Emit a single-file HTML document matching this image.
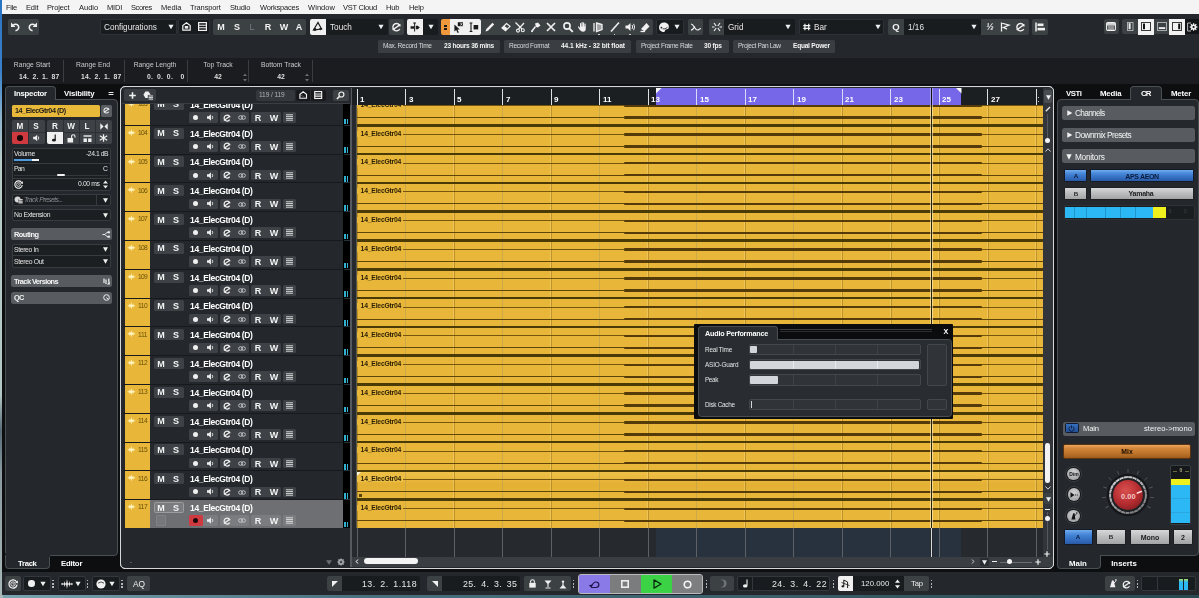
<!DOCTYPE html><html><head><meta charset="utf-8"><title>Cubase Project</title><style>
html,body{margin:0;padding:0}
body{width:1199px;height:598px;overflow:hidden;position:relative;background:#0d0e10;font-family:"Liberation Sans",sans-serif;}
div{position:absolute;box-sizing:border-box}
svg{position:absolute;overflow:visible}
.t{white-space:nowrap;will-change:transform}
</style></head><body>
<div style="left:0px;top:0px;width:1199px;height:598px;background:linear-gradient(90deg,#7aa4b0 0%,#4a7080 30%,#2a4a52 100%);"></div>
<div style="left:0px;top:0px;width:3px;height:598px;background:linear-gradient(180deg,#2a74c4 0%,#3a80c8 12%,#8fb4cc 20%,#b8ccc8 27%,#b4c6c4 66%,#5a6a78 72%,#8a9aa0 79%,#a8b8b8 100%);"></div>
<div style="left:2px;top:0px;width:1197px;height:595.2px;background:#0d0e10;"></div>
<div style="left:2px;top:0px;width:1197px;height:14.2px;background:#f4f4f4;"></div>
<div class="t" style="top:2.05px;line-height:11.5px;font-size:7.5px;color:#1a1a1a;letter-spacing:-0.273px;left:6.3px;">File</div>
<div class="t" style="top:2.05px;line-height:11.5px;font-size:7.5px;color:#1a1a1a;letter-spacing:-0.134px;left:25.9px;">Edit</div>
<div class="t" style="top:2.05px;line-height:11.5px;font-size:7.5px;color:#1a1a1a;letter-spacing:-0.135px;left:47.3px;">Project</div>
<div class="t" style="top:2.05px;line-height:11.5px;font-size:7.5px;color:#1a1a1a;letter-spacing:0.002px;left:78.6px;">Audio</div>
<div class="t" style="top:2.05px;line-height:11.5px;font-size:7.5px;color:#1a1a1a;letter-spacing:-0.186px;left:107px;">MIDI</div>
<div class="t" style="top:2.05px;line-height:11.5px;font-size:7.5px;color:#1a1a1a;letter-spacing:-0.407px;left:130.9px;">Scores</div>
<div class="t" style="top:2.05px;line-height:11.5px;font-size:7.5px;color:#1a1a1a;letter-spacing:-0.008px;left:161.4px;">Media</div>
<div class="t" style="top:2.05px;line-height:11.5px;font-size:7.5px;color:#1a1a1a;letter-spacing:-0.125px;left:190.4px;">Transport</div>
<div class="t" style="top:2.05px;line-height:11.5px;font-size:7.5px;color:#1a1a1a;letter-spacing:-0.147px;left:230px;">Studio</div>
<div class="t" style="top:2.05px;line-height:11.5px;font-size:7.5px;color:#1a1a1a;letter-spacing:-0.214px;left:259.9px;">Workspaces</div>
<div class="t" style="top:2.05px;line-height:11.5px;font-size:7.5px;color:#1a1a1a;letter-spacing:0.069px;left:307.6px;">Window</div>
<div class="t" style="top:2.05px;line-height:11.5px;font-size:7.5px;color:#1a1a1a;letter-spacing:-0.260px;left:343.3px;">VST Cloud</div>
<div class="t" style="top:2.05px;line-height:11.5px;font-size:7.5px;color:#1a1a1a;letter-spacing:-0.155px;left:386px;">Hub</div>
<div class="t" style="top:2.05px;line-height:11.5px;font-size:7.5px;color:#1a1a1a;letter-spacing:-0.209px;left:408.7px;">Help</div>
<div style="left:2px;top:14.2px;width:1197px;height:43.8px;background:#24282c;"></div>
<div style="left:8px;top:19px;width:31px;height:15.5px;background:#3c4144;border-radius:2px"></div>
<svg style="left:10px;top:21px" width="28" height="12" viewBox="0 0 28 12"><g fill="none" stroke="#f0f0f0" stroke-width="1.6"><path d="M3.2 4.2 A3.2 3.2 0 1 1 5.5 9.6"/><path d="M24.8 4.2 A3.2 3.2 0 1 0 22.5 9.6"/></g><path d="M1 1.5 L1 6 L5.5 6 Z" fill="#f0f0f0"/><path d="M27 1.5 L27 6 L22.5 6 Z" fill="#f0f0f0"/></svg>
<div style="left:100px;top:19px;width:77px;height:15.5px;background:#191c1f;border-radius:2px;border:1px solid #2e3236"></div>
<div class="t" style="top:21.50px;line-height:12.2px;font-size:8.2px;color:#e6e6e6;left:104px;">Configurations</div>
<svg style="left:168px;top:24px" width="6" height="6"><path d="M0.4 0.7 L5.6 0.7 L3 5.2 Z" fill="#f0f0f0"/></svg>
<div style="left:178px;top:19px;width:32px;height:15.5px;background:#191c1f;border-radius:2px;border:1px solid #2e3236"></div>
<svg style="left:182px;top:22px" width="9" height="9" viewBox="0 0 9 9"><path d="M0.8 8.2 L0.8 3.5 L4.5 0.8 L8.2 3.5 L8.2 8.2 Z" fill="none" stroke="#f0f0f0" stroke-width="1.2"/><rect x="2.8" y="4" width="3.4" height="2.6" fill="#f0f0f0"/></svg>
<svg style="left:198px;top:22px" width="9" height="9" viewBox="0 0 9 9"><rect x="0.6" y="0.6" width="7.8" height="7.8" fill="none" stroke="#f0f0f0" stroke-width="1.2"/><path d="M0.6 3.3 H8.4 M0.6 5.8 H8.4" stroke="#f0f0f0" stroke-width="1.1"/></svg>
<div style="left:213px;top:19px;width:93px;height:15.5px;background:#3c4144;border-radius:2px"></div>
<div class="t" style="top:20.50px;line-height:13px;font-size:9px;color:#f2f2f2;font-weight:bold;left:214.00px;width:14px;text-align:center;">M</div>
<div class="t" style="top:20.50px;line-height:13px;font-size:9px;color:#f2f2f2;font-weight:bold;left:230.00px;width:14px;text-align:center;">S</div>
<div class="t" style="top:20.50px;line-height:13px;font-size:9px;color:#777c80;left:245.00px;width:14px;text-align:center;">L</div>
<div class="t" style="top:20.50px;line-height:13px;font-size:9px;color:#f2f2f2;font-weight:bold;left:261.00px;width:14px;text-align:center;">R</div>
<div class="t" style="top:20.50px;line-height:13px;font-size:9px;color:#f2f2f2;font-weight:bold;left:277.00px;width:14px;text-align:center;">W</div>
<div class="t" style="top:20.50px;line-height:13px;font-size:9px;color:#f2f2f2;font-weight:bold;left:292.00px;width:14px;text-align:center;">A</div>
<div style="left:310px;top:19px;width:16px;height:15.5px;background:#f0f0f0;border-radius:2px 0 0 2px"></div>
<svg style="left:312px;top:21px" width="12" height="12" viewBox="0 0 12 12"><path d="M1.5 9 L6 1.5 L9.5 8 Z" fill="none" stroke="#1a1a1a" stroke-width="1.2"/><circle cx="3" cy="8.5" r="1.4" fill="#1a1a1a"/><path d="M7 7 h3.5 l-1.8 2.5z" fill="#1a1a1a"/></svg>
<div style="left:326px;top:19px;width:62px;height:15.5px;background:#191c1f;border-radius:0 2px 2px 0"></div>
<div class="t" style="top:21.50px;line-height:12.2px;font-size:8.2px;color:#e6e6e6;left:330px;">Touch</div>
<svg style="left:378px;top:24px" width="6" height="6"><path d="M0.4 0.7 L5.6 0.7 L3 5.2 Z" fill="#f0f0f0"/></svg>
<div style="left:389px;top:19px;width:15px;height:15.5px;background:#3c4144;border-radius:2px"></div>
<svg style="left:392px;top:22px" width="9" height="10" viewBox="0 0 9 10"><path d="M0.6 8 L8.4 2.4 M7.8 7 A3.7 3.7 0 1 1 8.2 4.3" fill="none" stroke="#f0f0f0" stroke-width="1.4"/></svg>
<div style="left:407px;top:19px;width:16px;height:15.5px;background:#f0f0f0;border-radius:2px 0 0 2px"></div>
<svg style="left:409px;top:21px" width="12" height="12" viewBox="0 0 12 12"><path d="M5.6 2 V10.5 M4.2 2 H7" stroke="#1a1a1a" stroke-width="1"/><path d="M1.6 5.2 H5 V7.8 H1.6Z M6.8 4.8 H8.8 L10.8 6.5 L8.8 8.2 H6.8Z" fill="#1a1a1a"/></svg>
<div style="left:423px;top:19px;width:15px;height:15.5px;background:#191c1f;border-radius:0 2px 2px 0"></div>
<svg style="left:427.5px;top:24px" width="6" height="6"><path d="M0.4 0.7 L5.6 0.7 L3 5.2 Z" fill="#f0f0f0"/></svg>
<div style="left:441px;top:19px;width:9px;height:15.5px;background:#f0983c;border-radius:2px 0 0 2px"></div>
<div style="left:444px;top:24.5px;width:2.6px;height:2px;background:#1a1a1a;"></div>
<div style="left:444px;top:28px;width:2.6px;height:2px;background:#1a1a1a;"></div>
<div style="left:449.5px;top:19px;width:31.2px;height:15.5px;background:#f0f0f0;border-radius:0 2px 2px 0"></div>
<svg style="left:452px;top:21px" width="12" height="13" viewBox="0 0 12 13"><path d="M2.4 3.6 L2.4 10.6 L4.2 9 L5.6 12 L6.8 11.4 L5.5 8.5 L7.8 8.4 Z" fill="#1a1a1a"/><path d="M5.8 1.2 h5.2 v4 h-5.2z" fill="#1a1a1a"/><path d="M8.4 1.8 L10.4 4.6 M10.4 1.8 L8.4 4.6" stroke="#f0f0f0" stroke-width="0.7"/></svg>
<svg style="left:468px;top:21px" width="12" height="12" viewBox="0 0 12 12"><path d="M1.6 2 H4.4 M1.6 10.5 H4.4 M3 2 V10.5" stroke="#1a1a1a" stroke-width="1.1" fill="none"/><rect x="5.6" y="4" width="4.6" height="4.4" fill="#1a1a1a"/></svg>
<div style="left:480.7px;top:19px;width:172.5px;height:15.5px;background:#3c4144;border-radius:0 2px 2px 0"></div>
<svg style="left:484px;top:21px" width="12" height="12" viewBox="0 0 12 12"><path d="M1.5 10.5 L2.3 8 L8.5 1.8 L10.2 3.5 L4 9.7 Z" fill="#f0f0f0"/></svg>
<svg style="left:499.5px;top:21px" width="12" height="12" viewBox="0 0 12 12"><path d="M2 7 L6.5 2.5 L10 5.3 L5.5 9.8 Z" fill="none" stroke="#f0f0f0" stroke-width="1.2"/><path d="M2 7 L4.2 4.8 L7.7 7.6 L5.5 9.8Z" fill="#f0f0f0"/></svg>
<svg style="left:514px;top:21px" width="12" height="12" viewBox="0 0 12 12"><path d="M1.5 1.5 L8 8 M10 2 L4.5 8" stroke="#f0f0f0" stroke-width="1.3"/><circle cx="8.8" cy="9.3" r="1.5" fill="none" stroke="#f0f0f0" stroke-width="1.1"/><circle cx="4" cy="9.6" r="1.5" fill="none" stroke="#f0f0f0" stroke-width="1.1"/></svg>
<svg style="left:530px;top:21px" width="12" height="12" viewBox="0 0 12 12"><path d="M5 2.5 L8 1.5 L10.5 4.5 L8 6.5 L6 6 Z" fill="#f0f0f0"/><path d="M5.5 5.5 L2 10" stroke="#f0f0f0" stroke-width="1.5"/><circle cx="2" cy="10.3" r="1" fill="#f0f0f0"/></svg>
<svg style="left:545px;top:21px" width="12" height="12" viewBox="0 0 12 12"><path d="M2 2 L10 10 M10 2 L2 10" stroke="#f0f0f0" stroke-width="1.7"/></svg>
<svg style="left:561.5px;top:21px" width="12" height="12" viewBox="0 0 12 12"><circle cx="5" cy="5" r="3.1" fill="none" stroke="#f0f0f0" stroke-width="1.6"/><path d="M7.3 7.3 L10.8 10.8" stroke="#f0f0f0" stroke-width="1.9"/></svg>
<svg style="left:577.3px;top:21px" width="12" height="12" viewBox="0 0 12 12"><path d="M3.6 6 V2.6 M5.1 6 V1.6 M6.6 6 V1.9 M8.1 6 V3" stroke="#f0f0f0" stroke-width="1.15" stroke-linecap="round"/><path d="M3 5.6 H8.7 V8 Q8.7 10.8 6 10.8 Q3.9 10.8 3 8.8Z" fill="#f0f0f0"/><path d="M3.3 8.6 L1.6 6" stroke="#f0f0f0" stroke-width="1.3" stroke-linecap="round"/></svg>
<svg style="left:592px;top:21px" width="12" height="12" viewBox="0 0 12 12"><path d="M2 2 V10.5 M4.5 2 L10 3.5 L10 8.5 L4.5 10.5 Z" stroke="#f0f0f0" stroke-width="1.3" fill="#f0f0f0" fill-opacity="0.55"/></svg>
<svg style="left:608.7px;top:21px" width="12" height="12" viewBox="0 0 12 12"><path d="M2 10.5 L10 1.5" stroke="#f0f0f0" stroke-width="1.6"/></svg>
<svg style="left:623.5px;top:21px" width="12" height="12" viewBox="0 0 12 12"><path d="M1.5 4.5 H3.8 L6.5 2 V10 L3.8 7.5 H1.5Z" fill="#f0f0f0"/><path d="M8 4 Q9.3 6 8 8 M9.6 2.8 Q11.6 6 9.6 9.2" stroke="#f0f0f0" stroke-width="1" fill="none"/></svg>
<svg style="left:639.3px;top:21px" width="12" height="12" viewBox="0 0 12 12"><path d="M2 8 L7.5 2 L10.5 5.5 L5.5 10.5 Z" fill="#f0f0f0"/><path d="M1.5 10.5 H6" stroke="#f0f0f0" stroke-width="1.3"/></svg>
<div style="left:598px;top:33.6px;width:1.6px;height:1.2px;background:#c8c8c8;"></div>
<div style="left:613.5px;top:33.6px;width:1.6px;height:1.2px;background:#c8c8c8;"></div>
<div style="left:629px;top:33.6px;width:1.6px;height:1.2px;background:#c8c8c8;"></div>
<div style="left:656px;top:19px;width:28px;height:15.5px;background:#191c1f;border-radius:2px;border:1px solid #2e3236"></div>
<svg style="left:658px;top:21px" width="12" height="12" viewBox="0 0 12 12"><path d="M6 1.5 C9.5 1.5 11.3 4 10.8 6.5 C10.3 8.6 8 8 7.2 9 C6.6 9.8 7.4 11 5.8 11 C2.6 11 0.8 8.4 1 6 C1.2 3.4 3.2 1.5 6 1.5Z" fill="#f0f0f0"/><circle cx="3.4" cy="6.6" r="0.9" fill="#191c1f"/><path d="M4.6 7.8 Q7 8.6 9.4 6.4" stroke="#191c1f" stroke-width="0.8" fill="none"/></svg>
<svg style="left:674px;top:24px" width="6" height="6"><path d="M0.4 0.7 L5.6 0.7 L3 5.2 Z" fill="#f0f0f0"/></svg>
<div style="left:688px;top:19px;width:15px;height:15.5px;background:#3c4144;border-radius:2px"></div>
<svg style="left:689.5px;top:21px" width="12" height="12" viewBox="0 0 12 12"><path d="M1 3 C4 3 4.5 9 7.5 9 C9 9 9.5 7.5 11 7.5 M1 9.2 C3 9.2 3.5 7 5 5.5" stroke="#f0f0f0" stroke-width="1.2" fill="none"/></svg>
<div style="left:709px;top:19px;width:15px;height:15.5px;background:#3c4144;border-radius:2px 0 0 2px"></div>
<svg style="left:710.5px;top:21px" width="12" height="12" viewBox="0 0 12 12"><path d="M3 2 L5.2 5 M9 2 L6.8 5 M3 10 L5.2 7 M9 10 L6.8 7 M1 6 H3.5 M8.5 6 H11" stroke="#f0f0f0" stroke-width="1.2"/></svg>
<div style="left:724px;top:19px;width:71px;height:15.5px;background:#191c1f;border-radius:0 2px 2px 0"></div>
<div class="t" style="top:21.50px;line-height:12.2px;font-size:8.2px;color:#e6e6e6;left:728px;">Grid</div>
<svg style="left:785px;top:24px" width="6" height="6"><path d="M0.4 0.7 L5.6 0.7 L3 5.2 Z" fill="#f0f0f0"/></svg>
<div style="left:799px;top:19px;width:85px;height:15.5px;background:#191c1f;border-radius:2px;border:1px solid #2e3236"></div>
<svg style="left:802px;top:21px" width="10" height="12" viewBox="0 0 12 12"><path d="M3.5 2 V10 M8 2 V10 M1.5 4.3 H10 M1.5 7.7 H10" stroke="#f0f0f0" stroke-width="1.5"/></svg>
<div class="t" style="top:21.50px;line-height:12.2px;font-size:8.2px;color:#e6e6e6;left:814px;">Bar</div>
<svg style="left:875px;top:24px" width="6" height="6"><path d="M0.4 0.7 L5.6 0.7 L3 5.2 Z" fill="#f0f0f0"/></svg>
<div style="left:888px;top:19px;width:16px;height:15.5px;background:#3c4144;border-radius:2px 0 0 2px"></div>
<div class="t" style="top:20.25px;line-height:13.5px;font-size:9.5px;color:#f0f0f0;font-weight:bold;left:889.00px;width:14px;text-align:center;">Q</div>
<div style="left:904px;top:19px;width:77px;height:15.5px;background:#191c1f;border-radius:0 2px 2px 0"></div>
<div class="t" style="top:21.50px;line-height:12.2px;font-size:8.2px;color:#e6e6e6;left:908px;">1/16</div>
<svg style="left:971px;top:24px" width="6" height="6"><path d="M0.4 0.7 L5.6 0.7 L3 5.2 Z" fill="#f0f0f0"/></svg>
<div style="left:981px;top:19px;width:48px;height:15.5px;background:#3c4144;border-radius:0 2px 2px 0"></div>
<div class="t" style="top:20.50px;line-height:13px;font-size:9px;color:#f0f0f0;font-weight:bold;left:983.00px;width:14px;text-align:center;font-style:italic;">&#189;</div>
<svg style="left:999px;top:21px" width="12" height="12" viewBox="0 0 12 12"><path d="M2.5 1.5 V10.5 M2.5 2 L10 4.2 L4.5 6.5 L8 8.2" stroke="#f0f0f0" stroke-width="1.3" fill="none"/></svg>
<svg style="left:1016px;top:22px" width="9" height="10" viewBox="0 0 9 10"><path d="M0.6 8 L8.4 2.4 M7.8 7 A3.7 3.7 0 1 1 8.2 4.3" fill="none" stroke="#f0f0f0" stroke-width="1.4"/></svg>
<div style="left:1032px;top:19px;width:16px;height:15.5px;background:#3c4144;border-radius:2px"></div>
<svg style="left:1034px;top:21px" width="12" height="12" viewBox="0 0 12 12"><path d="M2 1.5 V10.5" stroke="#f0f0f0" stroke-width="1.5"/><rect x="3.5" y="2.5" width="6" height="2.6" fill="#f0f0f0"/><rect x="3.5" y="6.8" width="7.5" height="2.6" fill="#f0f0f0"/></svg>
<div style="left:1103.5px;top:19px;width:15.5px;height:15px;background:#3c4144;border-radius:2px"></div>
<svg style="left:1106.3px;top:22px" width="10" height="9" viewBox="0 0 10 9"><rect x="0.6" y="0.6" width="8.8" height="7.8" rx="1.2" fill="none" stroke="#f0f0f0" stroke-width="1.1"/><rect x="1" y="1" width="8" height="2.6" fill="#f0f0f0" opacity="0.8"/><path d="M3 3.8 V8 M5 3.8 V8 M7 3.8 V8" stroke="#f0f0f0" stroke-width="0.9"/></svg>
<div style="left:1122.3px;top:19px;width:16px;height:15px;background:#3c4144;border-radius:2px 0 0 2px"></div>
<svg style="left:1127px;top:22px" width="7" height="9" viewBox="0 0 7 9"><rect x="0.5" y="0.5" width="5.5" height="8" fill="none" stroke="#b8babc" stroke-width="0.9"/><rect x="1.6" y="1.2" width="2" height="6" fill="#f0f0f0"/></svg>
<div style="left:1138px;top:18.5px;width:15.5px;height:16px;background:#f2f2f2;"></div>
<svg style="left:1141px;top:22px" width="10" height="9" viewBox="0 0 10 9"><rect x="0.5" y="0.5" width="9" height="8" fill="none" stroke="#3a3a3a" stroke-width="1"/><rect x="2" y="1.6" width="2" height="5.6" fill="#101010"/></svg>
<div style="left:1153.5px;top:19px;width:15.5px;height:15px;background:#3c4144;"></div>
<svg style="left:1156.5px;top:22px" width="10" height="9" viewBox="0 0 10 9"><rect x="0.5" y="0.5" width="9" height="8" fill="none" stroke="#b8babc" stroke-width="0.9"/><rect x="1.8" y="5.2" width="6.4" height="1.8" fill="#f0f0f0"/></svg>
<div style="left:1169px;top:18.5px;width:16px;height:16px;background:#f2f2f2;"></div>
<svg style="left:1172px;top:22px" width="10" height="9" viewBox="0 0 10 9"><rect x="0.5" y="0.5" width="9" height="8" fill="none" stroke="#3a3a3a" stroke-width="1"/><rect x="6.2" y="1.6" width="2" height="5.6" fill="#101010"/></svg>
<div style="left:1185px;top:19px;width:14px;height:15px;background:#121417;"></div>
<svg style="left:1187px;top:21.5px" width="11" height="10" viewBox="0 0 11 10"><path d="M4 1 H0.6 V9 H4" fill="none" stroke="#b8babc" stroke-width="1"/><g transform="translate(6.6,5)"><circle r="2.6" fill="#f0f0f0"/><path d="M0 -3.8 V3.8 M-3.8 0 H3.8 M-2.7 -2.7 L2.7 2.7 M2.7 -2.7 L-2.7 2.7" stroke="#f0f0f0" stroke-width="1.3"/><circle r="1.1" fill="#121417"/></g></svg>
<div style="left:378px;top:39.5px;width:121.5px;height:13px;background:#3a3e42;border-radius:1.5px"></div>
<div class="t" style="top:41.20px;line-height:10.6px;font-size:6.6px;color:#d6d8da;letter-spacing:-0.300px;left:383px;">Max. Record Time</div>
<div class="t" style="top:41.20px;line-height:10.6px;font-size:6.6px;color:#f2f2f2;font-weight:bold;letter-spacing:-0.242px;left:443.7px;">23 hours 36 mins</div>
<div style="left:504px;top:39.5px;width:127px;height:13px;background:#3a3e42;border-radius:1.5px"></div>
<div class="t" style="top:41.20px;line-height:10.6px;font-size:6.6px;color:#d6d8da;letter-spacing:-0.291px;left:509px;">Record Format</div>
<div class="t" style="top:41.20px;line-height:10.6px;font-size:6.6px;color:#f2f2f2;font-weight:bold;letter-spacing:-0.054px;left:561px;">44.1 kHz - 32 bit float</div>
<div style="left:635.5px;top:39.5px;width:93px;height:13px;background:#3a3e42;border-radius:1.5px"></div>
<div class="t" style="top:41.20px;line-height:10.6px;font-size:6.6px;color:#d6d8da;letter-spacing:-0.304px;left:640.5px;">Project Frame Rate</div>
<div class="t" style="top:41.20px;line-height:10.6px;font-size:6.6px;color:#f2f2f2;font-weight:bold;letter-spacing:-0.227px;left:704.3px;">30 fps</div>
<div style="left:732.5px;top:39.5px;width:102px;height:13px;background:#3a3e42;border-radius:1.5px"></div>
<div class="t" style="top:41.20px;line-height:10.6px;font-size:6.6px;color:#d6d8da;letter-spacing:-0.354px;left:737.5px;">Project Pan Law</div>
<div class="t" style="top:41.20px;line-height:10.6px;font-size:6.6px;color:#f2f2f2;font-weight:bold;letter-spacing:-0.253px;left:792.5px;">Equal Power</div>
<div style="left:2px;top:58px;width:1197px;height:25.5px;background:#1a1c1f;"></div>
<div style="left:62.5px;top:60px;width:1px;height:22px;background:#3a3e42;"></div>
<div style="left:124px;top:60px;width:1px;height:22px;background:#3a3e42;"></div>
<div style="left:186.5px;top:60px;width:1px;height:22px;background:#3a3e42;"></div>
<div style="left:247.5px;top:60px;width:1px;height:22px;background:#3a3e42;"></div>
<div style="left:312px;top:60px;width:1px;height:22px;background:#3a3e42;"></div>
<div class="t" style="top:60.10px;line-height:10.8px;font-size:6.8px;color:#c9cbcd;left:-3.00px;width:70px;text-align:center;">Range Start</div>
<div class="t" style="top:72.00px;line-height:10.8px;font-size:6.8px;color:#dedede;font-weight:bold;letter-spacing:0.165px;right:1139.33px;text-align:right;word-spacing:1.5px;">14. 2. 1. 87</div>
<div class="t" style="top:60.10px;line-height:10.8px;font-size:6.8px;color:#c9cbcd;left:58.00px;width:70px;text-align:center;">Range End</div>
<div class="t" style="top:72.00px;line-height:10.8px;font-size:6.8px;color:#dedede;font-weight:bold;letter-spacing:0.165px;right:1077.83px;text-align:right;word-spacing:1.5px;">14. 2. 1. 87</div>
<div class="t" style="top:60.10px;line-height:10.8px;font-size:6.8px;color:#c9cbcd;left:120.00px;width:70px;text-align:center;">Range Length</div>
<div class="t" style="top:72.00px;line-height:10.8px;font-size:6.8px;color:#dedede;font-weight:bold;letter-spacing:0.287px;right:1014.71px;text-align:right;word-spacing:1.5px;">0. 0. 0.&nbsp; 0</div>
<div class="t" style="top:60.10px;line-height:10.8px;font-size:6.8px;color:#c9cbcd;left:182.50px;width:70px;text-align:center;">Top Track</div>
<div class="t" style="top:72.00px;line-height:10.8px;font-size:6.8px;color:#dedede;font-weight:bold;left:197.50px;width:40px;text-align:center;">42</div>
<div class="t" style="top:60.10px;line-height:10.8px;font-size:6.8px;color:#c9cbcd;left:245.50px;width:70px;text-align:center;">Bottom Track</div>
<div class="t" style="top:72.00px;line-height:10.8px;font-size:6.8px;color:#dedede;font-weight:bold;left:260.50px;width:40px;text-align:center;">42</div>
<svg style="left:242.5px;top:72.5px" width="4" height="9"><path d="M0 3 L2 0.5 L4 3Z M0 6 L2 8.5 L4 6Z" fill="#6a6e72"/></svg>
<svg style="left:304.5px;top:72.5px" width="4" height="9"><path d="M0 3 L2 0.5 L4 3Z M0 6 L2 8.5 L4 6Z" fill="#6a6e72"/></svg>
<div style="left:4.5px;top:99px;width:113.5px;height:457px;background:#24282c;border:1px solid #4a4f54;border-radius:0 4px 4px 4px"></div>
<div style="left:4.5px;top:86px;width:51px;height:14px;background:#24282c;border:1px solid #4a4f54;border-bottom:none;border-radius:4px 4px 0 0"></div>
<div class="t" style="top:88.10px;line-height:11.8px;font-size:7.8px;color:#ffffff;font-weight:bold;letter-spacing:-0.244px;left:13.7px;">Inspector</div>
<div class="t" style="top:88.10px;line-height:11.8px;font-size:7.8px;color:#ffffff;font-weight:bold;letter-spacing:-0.144px;left:64.3px;">Visibility</div>
<div class="t" style="top:86.55px;line-height:13.5px;font-size:9.5px;color:#e8e8e8;font-weight:bold;left:106.00px;width:10px;text-align:center;">=</div>
<div style="left:4.5px;top:555px;width:45.5px;height:14px;background:#24282c;border:1px solid #4a4f54;border-top:none;border-radius:0 0 4px 4px"></div>
<div style="left:5.5px;top:553px;width:44px;height:4px;background:#24282c;"></div>
<div class="t" style="top:557.90px;line-height:11.8px;font-size:7.8px;color:#ffffff;font-weight:bold;letter-spacing:-0.358px;left:17.6px;">Track</div>
<div class="t" style="top:557.90px;line-height:11.8px;font-size:7.8px;color:#ffffff;font-weight:bold;letter-spacing:-0.222px;left:61px;">Editor</div>
<div style="left:11.5px;top:105px;width:88.5px;height:11.5px;background:#e9b93a;border-radius:1.5px"></div>
<div class="t" style="top:105.40px;line-height:11.2px;font-size:7.2px;color:#1a1a1a;font-weight:bold;letter-spacing:-0.421px;left:14.5px;">14_ElecGtr04 (D)</div>
<div style="left:101px;top:105px;width:10.5px;height:11.5px;background:#5a5e62;border-radius:1.5px"></div>
<svg style="left:102.8px;top:107.3px" width="7" height="7" viewBox="0 0 9 10"><path d="M0.8 7.8 L8.2 2.4 M7.6 6.8 A3.6 3.6 0 1 1 8 4.2" fill="none" stroke="#f0f0f0" stroke-width="1.5"/></svg>
<div style="left:11.5px;top:120px;width:33px;height:24px;background:#3e4246;border-radius:2px"></div>
<div style="left:46.5px;top:120px;width:65px;height:24px;background:#3e4246;border-radius:2px"></div>
<div style="left:28px;top:120px;width:0.8px;height:24px;background:#2c3034;"></div>
<div style="left:63px;top:120px;width:0.8px;height:24px;background:#2c3034;"></div>
<div style="left:79px;top:120px;width:0.8px;height:24px;background:#2c3034;"></div>
<div style="left:95px;top:120px;width:0.8px;height:24px;background:#2c3034;"></div>
<div style="left:11.5px;top:131.6px;width:100px;height:0.8px;background:#2c3034;"></div>
<div style="left:44.5px;top:120px;width:2px;height:24px;background:#24282c;"></div>
<div class="t" style="top:120.50px;line-height:12.2px;font-size:8.2px;color:#f2f2f2;font-weight:bold;left:13.00px;width:14px;text-align:center;">M</div>
<div class="t" style="top:120.50px;line-height:12.2px;font-size:8.2px;color:#f2f2f2;font-weight:bold;left:29.30px;width:14px;text-align:center;">S</div>
<div class="t" style="top:120.50px;line-height:12.2px;font-size:8.2px;color:#f2f2f2;font-weight:bold;left:47.50px;width:14px;text-align:center;">R</div>
<div class="t" style="top:120.50px;line-height:12.2px;font-size:8.2px;color:#f2f2f2;font-weight:bold;left:64.00px;width:14px;text-align:center;">W</div>
<div class="t" style="top:120.50px;line-height:12.2px;font-size:8.2px;color:#f2f2f2;font-weight:bold;left:80.00px;width:14px;text-align:center;">L</div>
<svg style="left:99.5px;top:122.5px" width="8" height="7"><path d="M0.3 0.3 L3.6 3.5 L0.3 6.7Z M7.7 0.3 L4.4 3.5 L7.7 6.7Z" fill="#f0f0f0"/></svg>
<div style="left:11.5px;top:132px;width:16.5px;height:12px;background:#cf3a40;border-radius:0 0 0 2px"></div>
<div style="left:17px;top:135.2px;width:5.6px;height:5.6px;background:#1a0808;border-radius:50%"></div>
<svg style="left:32px;top:134px" width="9" height="8" viewBox="0 0 12 12"><path d="M1 4 H3.8 L7 1 V11 L3.8 8 H1Z" fill="#f0f0f0"/><path d="M8.6 3.6 Q10.2 6 8.6 8.4" stroke="#f0f0f0" stroke-width="1.3" fill="none"/></svg>
<div style="left:46.5px;top:132px;width:16.5px;height:12px;background:#f0f0f0;border-radius:0 0 0 2px"></div>
<svg style="left:51px;top:134px" width="7" height="8"><path d="M4.2 0.5 V6" stroke="#1a1a1a" stroke-width="1.2"/><ellipse cx="2.9" cy="6.2" rx="1.9" ry="1.4" fill="#1a1a1a"/></svg>
<svg style="left:66.5px;top:133.5px" width="9" height="9"><rect x="0.5" y="4" width="5.6" height="4.5" fill="#f0f0f0"/><path d="M4.6 4 V2.4 Q4.6 0.8 6.3 0.8 Q8 0.8 8 2.4 V3.4" fill="none" stroke="#f0f0f0" stroke-width="1.1"/></svg>
<svg style="left:83px;top:134.5px" width="9" height="8"><path d="M0.5 1 H8.5" stroke="#f0f0f0" stroke-width="1.4"/><rect x="0.5" y="3.4" width="3.4" height="3.6" fill="#f0f0f0"/><rect x="5.1" y="3.4" width="3.4" height="3.6" fill="#f0f0f0"/></svg>
<svg style="left:99px;top:134px" width="9" height="8"><path d="M4.5 0.3 V7.7 M0.8 1.8 L8.2 6.2 M8.2 1.8 L0.8 6.2" stroke="#f0f0f0" stroke-width="1.3"/></svg>
<div style="left:11.5px;top:148px;width:99px;height:42.5px;background:#1c1f22;border:1px solid #383c40;border-radius:2px"></div>
<div style="left:12px;top:163.4px;width:98px;height:0.8px;background:#383c40;"></div>
<div style="left:12px;top:178px;width:98px;height:0.8px;background:#383c40;"></div>
<div class="t" style="top:148.60px;line-height:10.8px;font-size:6.8px;color:#e4e4e4;letter-spacing:-0.295px;left:13.7px;">Volume</div>
<div class="t" style="top:148.60px;line-height:10.8px;font-size:6.8px;color:#e4e4e4;letter-spacing:-0.450px;right:1091.05px;text-align:right;">-24.1 dB</div>
<div style="left:13.5px;top:158.6px;width:18px;height:2px;background:#4f9be0;"></div>
<div style="left:31.5px;top:158.6px;width:7.5px;height:2px;background:#f2f2f2;"></div>
<div class="t" style="top:163.60px;line-height:10.8px;font-size:6.8px;color:#e4e4e4;letter-spacing:-0.698px;left:13.7px;">Pan</div>
<div class="t" style="top:163.60px;line-height:10.8px;font-size:6.8px;color:#e4e4e4;right:1090.60px;text-align:right;">C</div>
<div style="left:14px;top:174.8px;width:94px;height:0.8px;background:#34383c;"></div>
<div style="left:57px;top:173.9px;width:8px;height:2.2px;background:#f2f2f2;border-radius:1px"></div>
<svg style="left:13.5px;top:180px" width="9" height="9" viewBox="0 0 9 9"><path d="M7.7 2.7 A3.7 3.7 0 1 0 8.2 5" fill="none" stroke="#f0f0f0" stroke-width="1.1"/><path d="M6.4 3.2 L8.9 1.2 L8.9 4Z" fill="#f0f0f0"/><circle cx="4.5" cy="4.5" r="1.9" fill="none" stroke="#f0f0f0" stroke-width="0.8"/><path d="M4.5 3.5 V4.6 H5.4" stroke="#f0f0f0" stroke-width="0.6" fill="none"/></svg>
<div class="t" style="top:179.10px;line-height:10.8px;font-size:6.8px;color:#e4e4e4;letter-spacing:-0.384px;right:1099.98px;text-align:right;">0.00 ms</div>
<svg style="left:103px;top:180px" width="5" height="9"><path d="M0 3.4 L2.5 0.4 L5 3.4Z M0 5.6 L2.5 8.6 L5 5.6Z" fill="#e8e8e8"/></svg>
<div style="left:11.5px;top:194px;width:99px;height:11.5px;background:#1c1f22;border:1px solid #383c40;border-radius:2px"></div>
<div style="left:95.5px;top:194.5px;width:0.8px;height:10.5px;background:#383c40;"></div>
<svg style="left:13.5px;top:196px" width="9" height="8" viewBox="0 0 9 8"><circle cx="3.6" cy="3.4" r="3" fill="#d8d8d8"/><path d="M4.5 3.6 H8.6 M4.5 5.2 H8.6 M4.5 6.8 H8.6" stroke="#d8d8d8" stroke-width="0.9"/><rect x="4" y="2.9" width="5" height="4.6" fill="#1c1f22" fill-opacity="0.55"/><path d="M4.5 3.6 H8.6 M4.5 5.2 H8.6 M4.5 6.8 H8.6" stroke="#e8e8e8" stroke-width="0.9"/></svg>
<div class="t" style="top:194.60px;line-height:10.8px;font-size:6.8px;color:#8a8e92;letter-spacing:-0.537px;left:23.7px;font-style:italic;">Track Presets...</div>
<svg style="left:102.5px;top:197.5px" width="5" height="5"><path d="M0 0.3 L5 0.3 L2.5 4.7Z" fill="#f0f0f0"/></svg>
<div style="left:11.5px;top:209px;width:99px;height:11.5px;background:#1c1f22;border:1px solid #383c40;border-radius:2px"></div>
<div class="t" style="top:209.60px;line-height:10.8px;font-size:6.8px;color:#e4e4e4;letter-spacing:-0.361px;left:14.1px;">No Extension</div>
<svg style="left:102.5px;top:212.5px" width="5" height="5"><path d="M0 0.3 L5 0.3 L2.5 4.7Z" fill="#f0f0f0"/></svg>
<div style="left:11px;top:228px;width:101px;height:12px;background:#585c60;border-radius:2.5px"></div>
<div class="t" style="top:228.50px;line-height:11.4px;font-size:7.4px;color:#f4f4f4;font-weight:bold;letter-spacing:-0.489px;left:14.1px;">Routing</div>
<svg style="left:102px;top:230.5px" width="8" height="7"><path d="M0.5 3.5 H3 M3 3.5 L5 1.3 H7.5 M3 3.5 L5 5.7 H7.5" stroke="#f0f0f0" stroke-width="1" fill="none"/><rect x="5.8" y="0.3" width="2" height="2" fill="#f0f0f0"/><rect x="5.8" y="4.7" width="2" height="2" fill="#f0f0f0"/></svg>
<div style="left:11.5px;top:243.5px;width:99px;height:24.5px;background:#1c1f22;border:1px solid #383c40;border-radius:2px"></div>
<div style="left:12px;top:255.4px;width:98px;height:0.8px;background:#383c40;"></div>
<div class="t" style="top:244.80px;line-height:10.8px;font-size:6.8px;color:#e4e4e4;letter-spacing:-0.344px;left:14.1px;">Stereo In</div>
<div class="t" style="top:256.70px;line-height:10.8px;font-size:6.8px;color:#e4e4e4;letter-spacing:-0.318px;left:14.1px;">Stereo Out</div>
<svg style="left:102.5px;top:247.2px" width="5" height="5"><path d="M0 0.3 L5 0.3 L2.5 4.7Z" fill="#f0f0f0"/></svg>
<svg style="left:102.5px;top:259.2px" width="5" height="5"><path d="M0 0.3 L5 0.3 L2.5 4.7Z" fill="#f0f0f0"/></svg>
<div style="left:11px;top:275.2px;width:101px;height:11.8px;background:#585c60;border-radius:2.5px"></div>
<div class="t" style="top:275.60px;line-height:11.4px;font-size:7.4px;color:#f4f4f4;font-weight:bold;letter-spacing:-0.578px;left:14.1px;">Track Versions</div>
<svg style="left:102.5px;top:277.8px" width="7" height="7"><path d="M1 0.5 V5 M3 1.5 V6 M5.8 0.5 V4.5" stroke="#f0f0f0" stroke-width="1.2"/><path d="M3.8 6.5 L6.8 6.5 L6.8 3.5 Z" fill="#f0f0f0"/></svg>
<div style="left:11px;top:292px;width:101px;height:11.5px;background:#585c60;border-radius:2.5px"></div>
<div class="t" style="top:292.25px;line-height:11.4px;font-size:7.4px;color:#f4f4f4;font-weight:bold;letter-spacing:-0.747px;left:14.1px;">QC</div>
<svg style="left:102.5px;top:294.2px" width="7" height="7"><circle cx="3.5" cy="3.5" r="2.8" fill="none" stroke="#f0f0f0" stroke-width="1"/><path d="M3.5 3.5 L4.8 5" stroke="#f0f0f0" stroke-width="1"/></svg>
<div style="left:120.3px;top:85.7px;width:934.2px;height:483.2px;background:#24282c;border:1.7px solid #d4d6d8;border-radius:5px"></div>
<div style="left:124.2px;top:89px;width:31.6px;height:12px;background:#3a3e42;border-radius:2px"></div>
<svg style="left:128.8px;top:91.7px" width="7" height="7"><path d="M3.5 0.2 V6.8 M0.2 3.5 H6.8" stroke="#f4f4f4" stroke-width="1.6"/></svg>
<svg style="left:142.8px;top:91px" width="10" height="9" viewBox="0 0 10 9"><path d="M2.4 0.6 H5.6 L7.6 3.8 L5.6 7 H2.4 L0.4 3.8Z" fill="#f0f0f0"/><rect x="4.8" y="3.9" width="5.4" height="4.6" fill="#3a3e42"/><path d="M5.6 5 H10 M5.6 6.6 H10 M5.6 8.1 H10" stroke="#f0f0f0" stroke-width="0.9"/></svg>
<div style="left:256px;top:89.5px;width:38.5px;height:11px;background:#34383c;border-radius:2px"></div>
<div class="t" style="top:90.30px;line-height:10.6px;font-size:6.6px;color:#aeb1b4;letter-spacing:-0.103px;left:258.5px;">119 / 119</div>
<div style="left:295.5px;top:89.5px;width:30px;height:11px;background:#17191c;border-radius:2px"></div>
<div style="left:310px;top:89.5px;width:0.8px;height:11px;background:#2a2d31;"></div>
<svg style="left:298.7px;top:91.2px" width="8.4" height="8" viewBox="0 0 9 9"><path d="M0.8 8.2 L0.8 3.8 L4.5 0.8 L8.2 3.8 L8.2 8.2 Z" fill="none" stroke="#f0f0f0" stroke-width="1.3"/><path d="M1 4 L6 7" stroke="#f0f0f0" stroke-width="0.6" opacity="0.5"/></svg>
<svg style="left:314px;top:91.3px" width="8.4" height="8" viewBox="0 0 9 9"><rect x="0.6" y="0.6" width="7.8" height="7.8" fill="none" stroke="#f0f0f0" stroke-width="1.3"/><path d="M0.6 3.3 H8.4 M0.6 5.8 H8.4" stroke="#f0f0f0" stroke-width="1.2"/></svg>
<div style="left:333px;top:89.5px;width:15.5px;height:11px;background:#3c4144;border-radius:2px"></div>
<svg style="left:336.3px;top:91px" width="9" height="9" viewBox="0 0 9 9"><circle cx="5.4" cy="3.5" r="2.5" fill="none" stroke="#f0f0f0" stroke-width="1.2"/><path d="M3.5 5.4 L0.9 8" stroke="#f0f0f0" stroke-width="1.5"/></svg>
<div style="left:122px;top:103.4px;width:228px;height:0.8px;background:#3a3e42;"></div>
<div style="left:122.5px;top:104.2px;width:921.0px;height:452.8px;overflow:hidden">
<div style="left:27.5px;top:-7.9px;width:193.5px;height:28.8px;background:#24282c;"></div>
<div style="left:2.5px;top:-7.9px;width:25.3px;height:28.8px;background:#e8b73a;"></div>
<div style="left:0.5px;top:-8.2px;width:220.5px;height:0.9px;background:#17191b;"></div>
<svg style="left:4.900000000000006px;top:-4.20px" width="8.6" height="7.5" viewBox="0 0 8 7"><path d="M0 3.5 L4 2.2 L8 3.5 L4 4.8Z M4 0 L4.9 3.5 L4 7 L3.1 3.5Z M2.3 1.5 L2.9 3.5 L2.3 5.5 L1.7 3.5Z M5.7 1.5 L6.3 3.5 L5.7 5.5 L5.1 3.5Z" fill="#fff3bc"/></svg>
<div class="t" style="top:-5.05px;line-height:10.7px;font-size:6.7px;color:#6a4f08;letter-spacing:-0.657px;left:15.7px;">103</div>
<div style="left:31.0px;top:-5.4px;width:30px;height:11px;background:#3e4246;border-radius:1.5px;"></div>
<div class="t" style="top:-5.80px;line-height:13px;font-size:9px;color:#f4f4f4;font-weight:bold;left:32.50px;width:12px;text-align:center;">M</div>
<div class="t" style="top:-5.80px;line-height:13px;font-size:9px;color:#f4f4f4;font-weight:bold;left:47.50px;width:12px;text-align:center;">S</div>
<div class="t" style="top:-5.35px;line-height:12.5px;font-size:8.5px;color:#ffffff;font-weight:bold;letter-spacing:-0.340px;left:67.9px;">14_ElecGtr04 (D)</div>
<div style="left:66.0px;top:8.1px;width:29px;height:10.6px;background:#3e4246;border-radius:1.5px"></div>
<div style="left:97.0px;top:8.1px;width:29px;height:10.6px;background:#3e4246;border-radius:1.5px"></div>
<div style="left:128.0px;top:8.1px;width:30px;height:10.6px;background:#3e4246;border-radius:1.5px"></div>
<div style="left:160.0px;top:8.1px;width:13px;height:10.6px;background:#3e4246;border-radius:1.5px"></div>
<div style="left:70.5px;top:10.9px;width:5px;height:5px;background:#f0f0f0;border-radius:50%"></div>
<svg style="left:83.5px;top:9.90px" width="9" height="7" viewBox="0 0 12 10"><path d="M1 3.3 H3.6 L6.6 0.5 V9.5 L3.6 6.7 H1Z" fill="#f0f0f0"/><path d="M8.3 2.8 Q10 5 8.3 7.2" stroke="#f0f0f0" stroke-width="1.3" fill="none"/></svg>
<svg style="left:100.5px;top:9.50px" width="8" height="8" viewBox="0 0 9 10"><path d="M0.6 8 L8.4 2.4 M7.8 7 A3.7 3.7 0 1 1 8.2 4.3" fill="none" stroke="#f0f0f0" stroke-width="1.5"/></svg>
<svg style="left:115.0px;top:11.10px" width="8" height="5" viewBox="0 0 8 5"><ellipse cx="2.6" cy="2.5" rx="2" ry="1.8" fill="none" stroke="#c9cbcd" stroke-width="0.9"/><ellipse cx="5.4" cy="2.5" rx="2" ry="1.8" fill="none" stroke="#c9cbcd" stroke-width="0.9"/></svg>
<div class="t" style="top:7.80px;line-height:13px;font-size:9px;color:#f4f4f4;font-weight:bold;left:129.50px;width:12px;text-align:center;">R</div>
<div class="t" style="top:7.80px;line-height:13px;font-size:9px;color:#f4f4f4;font-weight:bold;left:145.00px;width:12px;text-align:center;">W</div>
<svg style="left:163.0px;top:10.10px" width="7" height="7"><path d="M0 0.8 H7 M0 2.6 H7 M0 4.4 H7 M0 6.2 H7" stroke="#e4e4e4" stroke-width="0.9"/></svg>
<div style="left:220.7px;top:-7.9px;width:6.6px;height:28.8px;background:#000000;"></div>
<div style="left:221.5px;top:14.5px;width:1.9px;height:5.6px;background:#30b2d0;"></div>
<div style="left:224.0px;top:14.5px;width:1.9px;height:5.6px;background:#30b2d0;"></div>
<div style="left:221.0px;top:-8.2px;width:6px;height:0.9px;background:#23323a;"></div>
<div style="left:27.5px;top:20.9px;width:193.5px;height:28.8px;background:#24282c;"></div>
<div style="left:2.5px;top:20.9px;width:25.3px;height:28.8px;background:#e8b73a;"></div>
<div style="left:0.5px;top:20.6px;width:220.5px;height:0.9px;background:#17191b;"></div>
<svg style="left:4.900000000000006px;top:24.60px" width="8.6" height="7.5" viewBox="0 0 8 7"><path d="M0 3.5 L4 2.2 L8 3.5 L4 4.8Z M4 0 L4.9 3.5 L4 7 L3.1 3.5Z M2.3 1.5 L2.9 3.5 L2.3 5.5 L1.7 3.5Z M5.7 1.5 L6.3 3.5 L5.7 5.5 L5.1 3.5Z" fill="#fff3bc"/></svg>
<div class="t" style="top:23.75px;line-height:10.7px;font-size:6.7px;color:#6a4f08;letter-spacing:-0.657px;left:15.7px;">104</div>
<div style="left:31.0px;top:23.4px;width:30px;height:11px;background:#3e4246;border-radius:1.5px;"></div>
<div class="t" style="top:23.00px;line-height:13px;font-size:9px;color:#f4f4f4;font-weight:bold;left:32.50px;width:12px;text-align:center;">M</div>
<div class="t" style="top:23.00px;line-height:13px;font-size:9px;color:#f4f4f4;font-weight:bold;left:47.50px;width:12px;text-align:center;">S</div>
<div class="t" style="top:23.45px;line-height:12.5px;font-size:8.5px;color:#ffffff;font-weight:bold;letter-spacing:-0.340px;left:67.9px;">14_ElecGtr04 (D)</div>
<div style="left:66.0px;top:36.9px;width:29px;height:10.6px;background:#3e4246;border-radius:1.5px"></div>
<div style="left:97.0px;top:36.9px;width:29px;height:10.6px;background:#3e4246;border-radius:1.5px"></div>
<div style="left:128.0px;top:36.9px;width:30px;height:10.6px;background:#3e4246;border-radius:1.5px"></div>
<div style="left:160.0px;top:36.9px;width:13px;height:10.6px;background:#3e4246;border-radius:1.5px"></div>
<div style="left:70.5px;top:39.7px;width:5px;height:5px;background:#f0f0f0;border-radius:50%"></div>
<svg style="left:83.5px;top:38.70px" width="9" height="7" viewBox="0 0 12 10"><path d="M1 3.3 H3.6 L6.6 0.5 V9.5 L3.6 6.7 H1Z" fill="#f0f0f0"/><path d="M8.3 2.8 Q10 5 8.3 7.2" stroke="#f0f0f0" stroke-width="1.3" fill="none"/></svg>
<svg style="left:100.5px;top:38.30px" width="8" height="8" viewBox="0 0 9 10"><path d="M0.6 8 L8.4 2.4 M7.8 7 A3.7 3.7 0 1 1 8.2 4.3" fill="none" stroke="#f0f0f0" stroke-width="1.5"/></svg>
<svg style="left:115.0px;top:39.90px" width="8" height="5" viewBox="0 0 8 5"><ellipse cx="2.6" cy="2.5" rx="2" ry="1.8" fill="none" stroke="#c9cbcd" stroke-width="0.9"/><ellipse cx="5.4" cy="2.5" rx="2" ry="1.8" fill="none" stroke="#c9cbcd" stroke-width="0.9"/></svg>
<div class="t" style="top:36.60px;line-height:13px;font-size:9px;color:#f4f4f4;font-weight:bold;left:129.50px;width:12px;text-align:center;">R</div>
<div class="t" style="top:36.60px;line-height:13px;font-size:9px;color:#f4f4f4;font-weight:bold;left:145.00px;width:12px;text-align:center;">W</div>
<svg style="left:163.0px;top:38.90px" width="7" height="7"><path d="M0 0.8 H7 M0 2.6 H7 M0 4.4 H7 M0 6.2 H7" stroke="#e4e4e4" stroke-width="0.9"/></svg>
<div style="left:220.7px;top:20.9px;width:6.6px;height:28.8px;background:#000000;"></div>
<div style="left:221.5px;top:43.3px;width:1.9px;height:5.6px;background:#30b2d0;"></div>
<div style="left:224.0px;top:43.3px;width:1.9px;height:5.6px;background:#30b2d0;"></div>
<div style="left:221.0px;top:20.6px;width:6px;height:0.9px;background:#23323a;"></div>
<div style="left:27.5px;top:49.7px;width:193.5px;height:28.8px;background:#24282c;"></div>
<div style="left:2.5px;top:49.7px;width:25.3px;height:28.8px;background:#e8b73a;"></div>
<div style="left:0.5px;top:49.4px;width:220.5px;height:0.9px;background:#17191b;"></div>
<svg style="left:4.900000000000006px;top:53.40px" width="8.6" height="7.5" viewBox="0 0 8 7"><path d="M0 3.5 L4 2.2 L8 3.5 L4 4.8Z M4 0 L4.9 3.5 L4 7 L3.1 3.5Z M2.3 1.5 L2.9 3.5 L2.3 5.5 L1.7 3.5Z M5.7 1.5 L6.3 3.5 L5.7 5.5 L5.1 3.5Z" fill="#fff3bc"/></svg>
<div class="t" style="top:52.55px;line-height:10.7px;font-size:6.7px;color:#6a4f08;letter-spacing:-0.657px;left:15.7px;">105</div>
<div style="left:31.0px;top:52.2px;width:30px;height:11px;background:#3e4246;border-radius:1.5px;"></div>
<div class="t" style="top:51.80px;line-height:13px;font-size:9px;color:#f4f4f4;font-weight:bold;left:32.50px;width:12px;text-align:center;">M</div>
<div class="t" style="top:51.80px;line-height:13px;font-size:9px;color:#f4f4f4;font-weight:bold;left:47.50px;width:12px;text-align:center;">S</div>
<div class="t" style="top:52.25px;line-height:12.5px;font-size:8.5px;color:#ffffff;font-weight:bold;letter-spacing:-0.340px;left:67.9px;">14_ElecGtr04 (D)</div>
<div style="left:66.0px;top:65.7px;width:29px;height:10.6px;background:#3e4246;border-radius:1.5px"></div>
<div style="left:97.0px;top:65.7px;width:29px;height:10.6px;background:#3e4246;border-radius:1.5px"></div>
<div style="left:128.0px;top:65.7px;width:30px;height:10.6px;background:#3e4246;border-radius:1.5px"></div>
<div style="left:160.0px;top:65.7px;width:13px;height:10.6px;background:#3e4246;border-radius:1.5px"></div>
<div style="left:70.5px;top:68.5px;width:5px;height:5px;background:#f0f0f0;border-radius:50%"></div>
<svg style="left:83.5px;top:67.50px" width="9" height="7" viewBox="0 0 12 10"><path d="M1 3.3 H3.6 L6.6 0.5 V9.5 L3.6 6.7 H1Z" fill="#f0f0f0"/><path d="M8.3 2.8 Q10 5 8.3 7.2" stroke="#f0f0f0" stroke-width="1.3" fill="none"/></svg>
<svg style="left:100.5px;top:67.10px" width="8" height="8" viewBox="0 0 9 10"><path d="M0.6 8 L8.4 2.4 M7.8 7 A3.7 3.7 0 1 1 8.2 4.3" fill="none" stroke="#f0f0f0" stroke-width="1.5"/></svg>
<svg style="left:115.0px;top:68.70px" width="8" height="5" viewBox="0 0 8 5"><ellipse cx="2.6" cy="2.5" rx="2" ry="1.8" fill="none" stroke="#c9cbcd" stroke-width="0.9"/><ellipse cx="5.4" cy="2.5" rx="2" ry="1.8" fill="none" stroke="#c9cbcd" stroke-width="0.9"/></svg>
<div class="t" style="top:65.40px;line-height:13px;font-size:9px;color:#f4f4f4;font-weight:bold;left:129.50px;width:12px;text-align:center;">R</div>
<div class="t" style="top:65.40px;line-height:13px;font-size:9px;color:#f4f4f4;font-weight:bold;left:145.00px;width:12px;text-align:center;">W</div>
<svg style="left:163.0px;top:67.70px" width="7" height="7"><path d="M0 0.8 H7 M0 2.6 H7 M0 4.4 H7 M0 6.2 H7" stroke="#e4e4e4" stroke-width="0.9"/></svg>
<div style="left:220.7px;top:49.7px;width:6.6px;height:28.8px;background:#000000;"></div>
<div style="left:221.5px;top:72.1px;width:1.9px;height:5.6px;background:#30b2d0;"></div>
<div style="left:224.0px;top:72.1px;width:1.9px;height:5.6px;background:#30b2d0;"></div>
<div style="left:221.0px;top:49.4px;width:6px;height:0.9px;background:#23323a;"></div>
<div style="left:27.5px;top:78.5px;width:193.5px;height:28.8px;background:#24282c;"></div>
<div style="left:2.5px;top:78.5px;width:25.3px;height:28.8px;background:#e8b73a;"></div>
<div style="left:0.5px;top:78.2px;width:220.5px;height:0.9px;background:#17191b;"></div>
<svg style="left:4.900000000000006px;top:82.20px" width="8.6" height="7.5" viewBox="0 0 8 7"><path d="M0 3.5 L4 2.2 L8 3.5 L4 4.8Z M4 0 L4.9 3.5 L4 7 L3.1 3.5Z M2.3 1.5 L2.9 3.5 L2.3 5.5 L1.7 3.5Z M5.7 1.5 L6.3 3.5 L5.7 5.5 L5.1 3.5Z" fill="#fff3bc"/></svg>
<div class="t" style="top:81.35px;line-height:10.7px;font-size:6.7px;color:#6a4f08;letter-spacing:-0.657px;left:15.7px;">106</div>
<div style="left:31.0px;top:81.0px;width:30px;height:11px;background:#3e4246;border-radius:1.5px;"></div>
<div class="t" style="top:80.60px;line-height:13px;font-size:9px;color:#f4f4f4;font-weight:bold;left:32.50px;width:12px;text-align:center;">M</div>
<div class="t" style="top:80.60px;line-height:13px;font-size:9px;color:#f4f4f4;font-weight:bold;left:47.50px;width:12px;text-align:center;">S</div>
<div class="t" style="top:81.05px;line-height:12.5px;font-size:8.5px;color:#ffffff;font-weight:bold;letter-spacing:-0.340px;left:67.9px;">14_ElecGtr04 (D)</div>
<div style="left:66.0px;top:94.5px;width:29px;height:10.6px;background:#3e4246;border-radius:1.5px"></div>
<div style="left:97.0px;top:94.5px;width:29px;height:10.6px;background:#3e4246;border-radius:1.5px"></div>
<div style="left:128.0px;top:94.5px;width:30px;height:10.6px;background:#3e4246;border-radius:1.5px"></div>
<div style="left:160.0px;top:94.5px;width:13px;height:10.6px;background:#3e4246;border-radius:1.5px"></div>
<div style="left:70.5px;top:97.3px;width:5px;height:5px;background:#f0f0f0;border-radius:50%"></div>
<svg style="left:83.5px;top:96.30px" width="9" height="7" viewBox="0 0 12 10"><path d="M1 3.3 H3.6 L6.6 0.5 V9.5 L3.6 6.7 H1Z" fill="#f0f0f0"/><path d="M8.3 2.8 Q10 5 8.3 7.2" stroke="#f0f0f0" stroke-width="1.3" fill="none"/></svg>
<svg style="left:100.5px;top:95.90px" width="8" height="8" viewBox="0 0 9 10"><path d="M0.6 8 L8.4 2.4 M7.8 7 A3.7 3.7 0 1 1 8.2 4.3" fill="none" stroke="#f0f0f0" stroke-width="1.5"/></svg>
<svg style="left:115.0px;top:97.50px" width="8" height="5" viewBox="0 0 8 5"><ellipse cx="2.6" cy="2.5" rx="2" ry="1.8" fill="none" stroke="#c9cbcd" stroke-width="0.9"/><ellipse cx="5.4" cy="2.5" rx="2" ry="1.8" fill="none" stroke="#c9cbcd" stroke-width="0.9"/></svg>
<div class="t" style="top:94.20px;line-height:13px;font-size:9px;color:#f4f4f4;font-weight:bold;left:129.50px;width:12px;text-align:center;">R</div>
<div class="t" style="top:94.20px;line-height:13px;font-size:9px;color:#f4f4f4;font-weight:bold;left:145.00px;width:12px;text-align:center;">W</div>
<svg style="left:163.0px;top:96.50px" width="7" height="7"><path d="M0 0.8 H7 M0 2.6 H7 M0 4.4 H7 M0 6.2 H7" stroke="#e4e4e4" stroke-width="0.9"/></svg>
<div style="left:220.7px;top:78.5px;width:6.6px;height:28.8px;background:#000000;"></div>
<div style="left:221.5px;top:100.9px;width:1.9px;height:5.6px;background:#30b2d0;"></div>
<div style="left:224.0px;top:100.9px;width:1.9px;height:5.6px;background:#30b2d0;"></div>
<div style="left:221.0px;top:78.2px;width:6px;height:0.9px;background:#23323a;"></div>
<div style="left:27.5px;top:107.3px;width:193.5px;height:28.8px;background:#24282c;"></div>
<div style="left:2.5px;top:107.3px;width:25.3px;height:28.8px;background:#e8b73a;"></div>
<div style="left:0.5px;top:107.0px;width:220.5px;height:0.9px;background:#17191b;"></div>
<svg style="left:4.900000000000006px;top:111.00px" width="8.6" height="7.5" viewBox="0 0 8 7"><path d="M0 3.5 L4 2.2 L8 3.5 L4 4.8Z M4 0 L4.9 3.5 L4 7 L3.1 3.5Z M2.3 1.5 L2.9 3.5 L2.3 5.5 L1.7 3.5Z M5.7 1.5 L6.3 3.5 L5.7 5.5 L5.1 3.5Z" fill="#fff3bc"/></svg>
<div class="t" style="top:110.15px;line-height:10.7px;font-size:6.7px;color:#6a4f08;letter-spacing:-0.657px;left:15.7px;">107</div>
<div style="left:31.0px;top:109.8px;width:30px;height:11px;background:#3e4246;border-radius:1.5px;"></div>
<div class="t" style="top:109.40px;line-height:13px;font-size:9px;color:#f4f4f4;font-weight:bold;left:32.50px;width:12px;text-align:center;">M</div>
<div class="t" style="top:109.40px;line-height:13px;font-size:9px;color:#f4f4f4;font-weight:bold;left:47.50px;width:12px;text-align:center;">S</div>
<div class="t" style="top:109.85px;line-height:12.5px;font-size:8.5px;color:#ffffff;font-weight:bold;letter-spacing:-0.340px;left:67.9px;">14_ElecGtr04 (D)</div>
<div style="left:66.0px;top:123.3px;width:29px;height:10.6px;background:#3e4246;border-radius:1.5px"></div>
<div style="left:97.0px;top:123.3px;width:29px;height:10.6px;background:#3e4246;border-radius:1.5px"></div>
<div style="left:128.0px;top:123.3px;width:30px;height:10.6px;background:#3e4246;border-radius:1.5px"></div>
<div style="left:160.0px;top:123.3px;width:13px;height:10.6px;background:#3e4246;border-radius:1.5px"></div>
<div style="left:70.5px;top:126.1px;width:5px;height:5px;background:#f0f0f0;border-radius:50%"></div>
<svg style="left:83.5px;top:125.10px" width="9" height="7" viewBox="0 0 12 10"><path d="M1 3.3 H3.6 L6.6 0.5 V9.5 L3.6 6.7 H1Z" fill="#f0f0f0"/><path d="M8.3 2.8 Q10 5 8.3 7.2" stroke="#f0f0f0" stroke-width="1.3" fill="none"/></svg>
<svg style="left:100.5px;top:124.70px" width="8" height="8" viewBox="0 0 9 10"><path d="M0.6 8 L8.4 2.4 M7.8 7 A3.7 3.7 0 1 1 8.2 4.3" fill="none" stroke="#f0f0f0" stroke-width="1.5"/></svg>
<svg style="left:115.0px;top:126.30px" width="8" height="5" viewBox="0 0 8 5"><ellipse cx="2.6" cy="2.5" rx="2" ry="1.8" fill="none" stroke="#c9cbcd" stroke-width="0.9"/><ellipse cx="5.4" cy="2.5" rx="2" ry="1.8" fill="none" stroke="#c9cbcd" stroke-width="0.9"/></svg>
<div class="t" style="top:123.00px;line-height:13px;font-size:9px;color:#f4f4f4;font-weight:bold;left:129.50px;width:12px;text-align:center;">R</div>
<div class="t" style="top:123.00px;line-height:13px;font-size:9px;color:#f4f4f4;font-weight:bold;left:145.00px;width:12px;text-align:center;">W</div>
<svg style="left:163.0px;top:125.30px" width="7" height="7"><path d="M0 0.8 H7 M0 2.6 H7 M0 4.4 H7 M0 6.2 H7" stroke="#e4e4e4" stroke-width="0.9"/></svg>
<div style="left:220.7px;top:107.3px;width:6.6px;height:28.8px;background:#000000;"></div>
<div style="left:221.5px;top:129.7px;width:1.9px;height:5.6px;background:#30b2d0;"></div>
<div style="left:224.0px;top:129.7px;width:1.9px;height:5.6px;background:#30b2d0;"></div>
<div style="left:221.0px;top:107.0px;width:6px;height:0.9px;background:#23323a;"></div>
<div style="left:27.5px;top:136.1px;width:193.5px;height:28.8px;background:#24282c;"></div>
<div style="left:2.5px;top:136.1px;width:25.3px;height:28.8px;background:#e8b73a;"></div>
<div style="left:0.5px;top:135.8px;width:220.5px;height:0.9px;background:#17191b;"></div>
<svg style="left:4.900000000000006px;top:139.80px" width="8.6" height="7.5" viewBox="0 0 8 7"><path d="M0 3.5 L4 2.2 L8 3.5 L4 4.8Z M4 0 L4.9 3.5 L4 7 L3.1 3.5Z M2.3 1.5 L2.9 3.5 L2.3 5.5 L1.7 3.5Z M5.7 1.5 L6.3 3.5 L5.7 5.5 L5.1 3.5Z" fill="#fff3bc"/></svg>
<div class="t" style="top:138.95px;line-height:10.7px;font-size:6.7px;color:#6a4f08;letter-spacing:-0.657px;left:15.7px;">108</div>
<div style="left:31.0px;top:138.6px;width:30px;height:11px;background:#3e4246;border-radius:1.5px;"></div>
<div class="t" style="top:138.20px;line-height:13px;font-size:9px;color:#f4f4f4;font-weight:bold;left:32.50px;width:12px;text-align:center;">M</div>
<div class="t" style="top:138.20px;line-height:13px;font-size:9px;color:#f4f4f4;font-weight:bold;left:47.50px;width:12px;text-align:center;">S</div>
<div class="t" style="top:138.65px;line-height:12.5px;font-size:8.5px;color:#ffffff;font-weight:bold;letter-spacing:-0.340px;left:67.9px;">14_ElecGtr04 (D)</div>
<div style="left:66.0px;top:152.1px;width:29px;height:10.6px;background:#3e4246;border-radius:1.5px"></div>
<div style="left:97.0px;top:152.1px;width:29px;height:10.6px;background:#3e4246;border-radius:1.5px"></div>
<div style="left:128.0px;top:152.1px;width:30px;height:10.6px;background:#3e4246;border-radius:1.5px"></div>
<div style="left:160.0px;top:152.1px;width:13px;height:10.6px;background:#3e4246;border-radius:1.5px"></div>
<div style="left:70.5px;top:154.9px;width:5px;height:5px;background:#f0f0f0;border-radius:50%"></div>
<svg style="left:83.5px;top:153.90px" width="9" height="7" viewBox="0 0 12 10"><path d="M1 3.3 H3.6 L6.6 0.5 V9.5 L3.6 6.7 H1Z" fill="#f0f0f0"/><path d="M8.3 2.8 Q10 5 8.3 7.2" stroke="#f0f0f0" stroke-width="1.3" fill="none"/></svg>
<svg style="left:100.5px;top:153.50px" width="8" height="8" viewBox="0 0 9 10"><path d="M0.6 8 L8.4 2.4 M7.8 7 A3.7 3.7 0 1 1 8.2 4.3" fill="none" stroke="#f0f0f0" stroke-width="1.5"/></svg>
<svg style="left:115.0px;top:155.10px" width="8" height="5" viewBox="0 0 8 5"><ellipse cx="2.6" cy="2.5" rx="2" ry="1.8" fill="none" stroke="#c9cbcd" stroke-width="0.9"/><ellipse cx="5.4" cy="2.5" rx="2" ry="1.8" fill="none" stroke="#c9cbcd" stroke-width="0.9"/></svg>
<div class="t" style="top:151.80px;line-height:13px;font-size:9px;color:#f4f4f4;font-weight:bold;left:129.50px;width:12px;text-align:center;">R</div>
<div class="t" style="top:151.80px;line-height:13px;font-size:9px;color:#f4f4f4;font-weight:bold;left:145.00px;width:12px;text-align:center;">W</div>
<svg style="left:163.0px;top:154.10px" width="7" height="7"><path d="M0 0.8 H7 M0 2.6 H7 M0 4.4 H7 M0 6.2 H7" stroke="#e4e4e4" stroke-width="0.9"/></svg>
<div style="left:220.7px;top:136.1px;width:6.6px;height:28.8px;background:#000000;"></div>
<div style="left:221.5px;top:158.5px;width:1.9px;height:5.6px;background:#30b2d0;"></div>
<div style="left:224.0px;top:158.5px;width:1.9px;height:5.6px;background:#30b2d0;"></div>
<div style="left:221.0px;top:135.8px;width:6px;height:0.9px;background:#23323a;"></div>
<div style="left:27.5px;top:164.9px;width:193.5px;height:28.8px;background:#24282c;"></div>
<div style="left:2.5px;top:164.9px;width:25.3px;height:28.8px;background:#e8b73a;"></div>
<div style="left:0.5px;top:164.6px;width:220.5px;height:0.9px;background:#17191b;"></div>
<svg style="left:4.900000000000006px;top:168.60px" width="8.6" height="7.5" viewBox="0 0 8 7"><path d="M0 3.5 L4 2.2 L8 3.5 L4 4.8Z M4 0 L4.9 3.5 L4 7 L3.1 3.5Z M2.3 1.5 L2.9 3.5 L2.3 5.5 L1.7 3.5Z M5.7 1.5 L6.3 3.5 L5.7 5.5 L5.1 3.5Z" fill="#fff3bc"/></svg>
<div class="t" style="top:167.75px;line-height:10.7px;font-size:6.7px;color:#6a4f08;letter-spacing:-0.657px;left:15.7px;">109</div>
<div style="left:31.0px;top:167.4px;width:30px;height:11px;background:#3e4246;border-radius:1.5px;"></div>
<div class="t" style="top:167.00px;line-height:13px;font-size:9px;color:#f4f4f4;font-weight:bold;left:32.50px;width:12px;text-align:center;">M</div>
<div class="t" style="top:167.00px;line-height:13px;font-size:9px;color:#f4f4f4;font-weight:bold;left:47.50px;width:12px;text-align:center;">S</div>
<div class="t" style="top:167.45px;line-height:12.5px;font-size:8.5px;color:#ffffff;font-weight:bold;letter-spacing:-0.340px;left:67.9px;">14_ElecGtr04 (D)</div>
<div style="left:66.0px;top:180.9px;width:29px;height:10.6px;background:#3e4246;border-radius:1.5px"></div>
<div style="left:97.0px;top:180.9px;width:29px;height:10.6px;background:#3e4246;border-radius:1.5px"></div>
<div style="left:128.0px;top:180.9px;width:30px;height:10.6px;background:#3e4246;border-radius:1.5px"></div>
<div style="left:160.0px;top:180.9px;width:13px;height:10.6px;background:#3e4246;border-radius:1.5px"></div>
<div style="left:70.5px;top:183.7px;width:5px;height:5px;background:#f0f0f0;border-radius:50%"></div>
<svg style="left:83.5px;top:182.70px" width="9" height="7" viewBox="0 0 12 10"><path d="M1 3.3 H3.6 L6.6 0.5 V9.5 L3.6 6.7 H1Z" fill="#f0f0f0"/><path d="M8.3 2.8 Q10 5 8.3 7.2" stroke="#f0f0f0" stroke-width="1.3" fill="none"/></svg>
<svg style="left:100.5px;top:182.30px" width="8" height="8" viewBox="0 0 9 10"><path d="M0.6 8 L8.4 2.4 M7.8 7 A3.7 3.7 0 1 1 8.2 4.3" fill="none" stroke="#f0f0f0" stroke-width="1.5"/></svg>
<svg style="left:115.0px;top:183.90px" width="8" height="5" viewBox="0 0 8 5"><ellipse cx="2.6" cy="2.5" rx="2" ry="1.8" fill="none" stroke="#c9cbcd" stroke-width="0.9"/><ellipse cx="5.4" cy="2.5" rx="2" ry="1.8" fill="none" stroke="#c9cbcd" stroke-width="0.9"/></svg>
<div class="t" style="top:180.60px;line-height:13px;font-size:9px;color:#f4f4f4;font-weight:bold;left:129.50px;width:12px;text-align:center;">R</div>
<div class="t" style="top:180.60px;line-height:13px;font-size:9px;color:#f4f4f4;font-weight:bold;left:145.00px;width:12px;text-align:center;">W</div>
<svg style="left:163.0px;top:182.90px" width="7" height="7"><path d="M0 0.8 H7 M0 2.6 H7 M0 4.4 H7 M0 6.2 H7" stroke="#e4e4e4" stroke-width="0.9"/></svg>
<div style="left:220.7px;top:164.9px;width:6.6px;height:28.8px;background:#000000;"></div>
<div style="left:221.5px;top:187.3px;width:1.9px;height:5.6px;background:#30b2d0;"></div>
<div style="left:224.0px;top:187.3px;width:1.9px;height:5.6px;background:#30b2d0;"></div>
<div style="left:221.0px;top:164.6px;width:6px;height:0.9px;background:#23323a;"></div>
<div style="left:27.5px;top:193.7px;width:193.5px;height:28.8px;background:#24282c;"></div>
<div style="left:2.5px;top:193.7px;width:25.3px;height:28.8px;background:#e8b73a;"></div>
<div style="left:0.5px;top:193.4px;width:220.5px;height:0.9px;background:#17191b;"></div>
<svg style="left:4.900000000000006px;top:197.40px" width="8.6" height="7.5" viewBox="0 0 8 7"><path d="M0 3.5 L4 2.2 L8 3.5 L4 4.8Z M4 0 L4.9 3.5 L4 7 L3.1 3.5Z M2.3 1.5 L2.9 3.5 L2.3 5.5 L1.7 3.5Z M5.7 1.5 L6.3 3.5 L5.7 5.5 L5.1 3.5Z" fill="#fff3bc"/></svg>
<div class="t" style="top:196.55px;line-height:10.7px;font-size:6.7px;color:#6a4f08;letter-spacing:-0.491px;left:15.7px;">110</div>
<div style="left:31.0px;top:196.2px;width:30px;height:11px;background:#3e4246;border-radius:1.5px;"></div>
<div class="t" style="top:195.80px;line-height:13px;font-size:9px;color:#f4f4f4;font-weight:bold;left:32.50px;width:12px;text-align:center;">M</div>
<div class="t" style="top:195.80px;line-height:13px;font-size:9px;color:#f4f4f4;font-weight:bold;left:47.50px;width:12px;text-align:center;">S</div>
<div class="t" style="top:196.25px;line-height:12.5px;font-size:8.5px;color:#ffffff;font-weight:bold;letter-spacing:-0.340px;left:67.9px;">14_ElecGtr04 (D)</div>
<div style="left:66.0px;top:209.7px;width:29px;height:10.6px;background:#3e4246;border-radius:1.5px"></div>
<div style="left:97.0px;top:209.7px;width:29px;height:10.6px;background:#3e4246;border-radius:1.5px"></div>
<div style="left:128.0px;top:209.7px;width:30px;height:10.6px;background:#3e4246;border-radius:1.5px"></div>
<div style="left:160.0px;top:209.7px;width:13px;height:10.6px;background:#3e4246;border-radius:1.5px"></div>
<div style="left:70.5px;top:212.5px;width:5px;height:5px;background:#f0f0f0;border-radius:50%"></div>
<svg style="left:83.5px;top:211.50px" width="9" height="7" viewBox="0 0 12 10"><path d="M1 3.3 H3.6 L6.6 0.5 V9.5 L3.6 6.7 H1Z" fill="#f0f0f0"/><path d="M8.3 2.8 Q10 5 8.3 7.2" stroke="#f0f0f0" stroke-width="1.3" fill="none"/></svg>
<svg style="left:100.5px;top:211.10px" width="8" height="8" viewBox="0 0 9 10"><path d="M0.6 8 L8.4 2.4 M7.8 7 A3.7 3.7 0 1 1 8.2 4.3" fill="none" stroke="#f0f0f0" stroke-width="1.5"/></svg>
<svg style="left:115.0px;top:212.70px" width="8" height="5" viewBox="0 0 8 5"><ellipse cx="2.6" cy="2.5" rx="2" ry="1.8" fill="none" stroke="#c9cbcd" stroke-width="0.9"/><ellipse cx="5.4" cy="2.5" rx="2" ry="1.8" fill="none" stroke="#c9cbcd" stroke-width="0.9"/></svg>
<div class="t" style="top:209.40px;line-height:13px;font-size:9px;color:#f4f4f4;font-weight:bold;left:129.50px;width:12px;text-align:center;">R</div>
<div class="t" style="top:209.40px;line-height:13px;font-size:9px;color:#f4f4f4;font-weight:bold;left:145.00px;width:12px;text-align:center;">W</div>
<svg style="left:163.0px;top:211.70px" width="7" height="7"><path d="M0 0.8 H7 M0 2.6 H7 M0 4.4 H7 M0 6.2 H7" stroke="#e4e4e4" stroke-width="0.9"/></svg>
<div style="left:220.7px;top:193.7px;width:6.6px;height:28.8px;background:#000000;"></div>
<div style="left:221.5px;top:216.1px;width:1.9px;height:5.6px;background:#30b2d0;"></div>
<div style="left:224.0px;top:216.1px;width:1.9px;height:5.6px;background:#30b2d0;"></div>
<div style="left:221.0px;top:193.4px;width:6px;height:0.9px;background:#23323a;"></div>
<div style="left:27.5px;top:222.5px;width:193.5px;height:28.8px;background:#24282c;"></div>
<div style="left:2.5px;top:222.5px;width:25.3px;height:28.8px;background:#e8b73a;"></div>
<div style="left:0.5px;top:222.2px;width:220.5px;height:0.9px;background:#17191b;"></div>
<svg style="left:4.900000000000006px;top:226.20px" width="8.6" height="7.5" viewBox="0 0 8 7"><path d="M0 3.5 L4 2.2 L8 3.5 L4 4.8Z M4 0 L4.9 3.5 L4 7 L3.1 3.5Z M2.3 1.5 L2.9 3.5 L2.3 5.5 L1.7 3.5Z M5.7 1.5 L6.3 3.5 L5.7 5.5 L5.1 3.5Z" fill="#fff3bc"/></svg>
<div class="t" style="top:225.35px;line-height:10.7px;font-size:6.7px;color:#6a4f08;letter-spacing:-0.324px;left:15.7px;">111</div>
<div style="left:31.0px;top:225.0px;width:30px;height:11px;background:#3e4246;border-radius:1.5px;"></div>
<div class="t" style="top:224.60px;line-height:13px;font-size:9px;color:#f4f4f4;font-weight:bold;left:32.50px;width:12px;text-align:center;">M</div>
<div class="t" style="top:224.60px;line-height:13px;font-size:9px;color:#f4f4f4;font-weight:bold;left:47.50px;width:12px;text-align:center;">S</div>
<div class="t" style="top:225.05px;line-height:12.5px;font-size:8.5px;color:#ffffff;font-weight:bold;letter-spacing:-0.340px;left:67.9px;">14_ElecGtr04 (D)</div>
<div style="left:66.0px;top:238.5px;width:29px;height:10.6px;background:#3e4246;border-radius:1.5px"></div>
<div style="left:97.0px;top:238.5px;width:29px;height:10.6px;background:#3e4246;border-radius:1.5px"></div>
<div style="left:128.0px;top:238.5px;width:30px;height:10.6px;background:#3e4246;border-radius:1.5px"></div>
<div style="left:160.0px;top:238.5px;width:13px;height:10.6px;background:#3e4246;border-radius:1.5px"></div>
<div style="left:70.5px;top:241.3px;width:5px;height:5px;background:#f0f0f0;border-radius:50%"></div>
<svg style="left:83.5px;top:240.30px" width="9" height="7" viewBox="0 0 12 10"><path d="M1 3.3 H3.6 L6.6 0.5 V9.5 L3.6 6.7 H1Z" fill="#f0f0f0"/><path d="M8.3 2.8 Q10 5 8.3 7.2" stroke="#f0f0f0" stroke-width="1.3" fill="none"/></svg>
<svg style="left:100.5px;top:239.90px" width="8" height="8" viewBox="0 0 9 10"><path d="M0.6 8 L8.4 2.4 M7.8 7 A3.7 3.7 0 1 1 8.2 4.3" fill="none" stroke="#f0f0f0" stroke-width="1.5"/></svg>
<svg style="left:115.0px;top:241.50px" width="8" height="5" viewBox="0 0 8 5"><ellipse cx="2.6" cy="2.5" rx="2" ry="1.8" fill="none" stroke="#c9cbcd" stroke-width="0.9"/><ellipse cx="5.4" cy="2.5" rx="2" ry="1.8" fill="none" stroke="#c9cbcd" stroke-width="0.9"/></svg>
<div class="t" style="top:238.20px;line-height:13px;font-size:9px;color:#f4f4f4;font-weight:bold;left:129.50px;width:12px;text-align:center;">R</div>
<div class="t" style="top:238.20px;line-height:13px;font-size:9px;color:#f4f4f4;font-weight:bold;left:145.00px;width:12px;text-align:center;">W</div>
<svg style="left:163.0px;top:240.50px" width="7" height="7"><path d="M0 0.8 H7 M0 2.6 H7 M0 4.4 H7 M0 6.2 H7" stroke="#e4e4e4" stroke-width="0.9"/></svg>
<div style="left:220.7px;top:222.5px;width:6.6px;height:28.8px;background:#000000;"></div>
<div style="left:221.5px;top:244.9px;width:1.9px;height:5.6px;background:#30b2d0;"></div>
<div style="left:224.0px;top:244.9px;width:1.9px;height:5.6px;background:#30b2d0;"></div>
<div style="left:221.0px;top:222.2px;width:6px;height:0.9px;background:#23323a;"></div>
<div style="left:27.5px;top:251.3px;width:193.5px;height:28.8px;background:#24282c;"></div>
<div style="left:2.5px;top:251.3px;width:25.3px;height:28.8px;background:#e8b73a;"></div>
<div style="left:0.5px;top:251.0px;width:220.5px;height:0.9px;background:#17191b;"></div>
<svg style="left:4.900000000000006px;top:255.00px" width="8.6" height="7.5" viewBox="0 0 8 7"><path d="M0 3.5 L4 2.2 L8 3.5 L4 4.8Z M4 0 L4.9 3.5 L4 7 L3.1 3.5Z M2.3 1.5 L2.9 3.5 L2.3 5.5 L1.7 3.5Z M5.7 1.5 L6.3 3.5 L5.7 5.5 L5.1 3.5Z" fill="#fff3bc"/></svg>
<div class="t" style="top:254.15px;line-height:10.7px;font-size:6.7px;color:#6a4f08;letter-spacing:-0.491px;left:15.7px;">112</div>
<div style="left:31.0px;top:253.8px;width:30px;height:11px;background:#3e4246;border-radius:1.5px;"></div>
<div class="t" style="top:253.40px;line-height:13px;font-size:9px;color:#f4f4f4;font-weight:bold;left:32.50px;width:12px;text-align:center;">M</div>
<div class="t" style="top:253.40px;line-height:13px;font-size:9px;color:#f4f4f4;font-weight:bold;left:47.50px;width:12px;text-align:center;">S</div>
<div class="t" style="top:253.85px;line-height:12.5px;font-size:8.5px;color:#ffffff;font-weight:bold;letter-spacing:-0.340px;left:67.9px;">14_ElecGtr04 (D)</div>
<div style="left:66.0px;top:267.3px;width:29px;height:10.6px;background:#3e4246;border-radius:1.5px"></div>
<div style="left:97.0px;top:267.3px;width:29px;height:10.6px;background:#3e4246;border-radius:1.5px"></div>
<div style="left:128.0px;top:267.3px;width:30px;height:10.6px;background:#3e4246;border-radius:1.5px"></div>
<div style="left:160.0px;top:267.3px;width:13px;height:10.6px;background:#3e4246;border-radius:1.5px"></div>
<div style="left:70.5px;top:270.1px;width:5px;height:5px;background:#f0f0f0;border-radius:50%"></div>
<svg style="left:83.5px;top:269.10px" width="9" height="7" viewBox="0 0 12 10"><path d="M1 3.3 H3.6 L6.6 0.5 V9.5 L3.6 6.7 H1Z" fill="#f0f0f0"/><path d="M8.3 2.8 Q10 5 8.3 7.2" stroke="#f0f0f0" stroke-width="1.3" fill="none"/></svg>
<svg style="left:100.5px;top:268.70px" width="8" height="8" viewBox="0 0 9 10"><path d="M0.6 8 L8.4 2.4 M7.8 7 A3.7 3.7 0 1 1 8.2 4.3" fill="none" stroke="#f0f0f0" stroke-width="1.5"/></svg>
<svg style="left:115.0px;top:270.30px" width="8" height="5" viewBox="0 0 8 5"><ellipse cx="2.6" cy="2.5" rx="2" ry="1.8" fill="none" stroke="#c9cbcd" stroke-width="0.9"/><ellipse cx="5.4" cy="2.5" rx="2" ry="1.8" fill="none" stroke="#c9cbcd" stroke-width="0.9"/></svg>
<div class="t" style="top:267.00px;line-height:13px;font-size:9px;color:#f4f4f4;font-weight:bold;left:129.50px;width:12px;text-align:center;">R</div>
<div class="t" style="top:267.00px;line-height:13px;font-size:9px;color:#f4f4f4;font-weight:bold;left:145.00px;width:12px;text-align:center;">W</div>
<svg style="left:163.0px;top:269.30px" width="7" height="7"><path d="M0 0.8 H7 M0 2.6 H7 M0 4.4 H7 M0 6.2 H7" stroke="#e4e4e4" stroke-width="0.9"/></svg>
<div style="left:220.7px;top:251.3px;width:6.6px;height:28.8px;background:#000000;"></div>
<div style="left:221.5px;top:273.7px;width:1.9px;height:5.6px;background:#30b2d0;"></div>
<div style="left:224.0px;top:273.7px;width:1.9px;height:5.6px;background:#30b2d0;"></div>
<div style="left:221.0px;top:251.0px;width:6px;height:0.9px;background:#23323a;"></div>
<div style="left:27.5px;top:280.1px;width:193.5px;height:28.8px;background:#24282c;"></div>
<div style="left:2.5px;top:280.1px;width:25.3px;height:28.8px;background:#e8b73a;"></div>
<div style="left:0.5px;top:279.8px;width:220.5px;height:0.9px;background:#17191b;"></div>
<svg style="left:4.900000000000006px;top:283.80px" width="8.6" height="7.5" viewBox="0 0 8 7"><path d="M0 3.5 L4 2.2 L8 3.5 L4 4.8Z M4 0 L4.9 3.5 L4 7 L3.1 3.5Z M2.3 1.5 L2.9 3.5 L2.3 5.5 L1.7 3.5Z M5.7 1.5 L6.3 3.5 L5.7 5.5 L5.1 3.5Z" fill="#fff3bc"/></svg>
<div class="t" style="top:282.95px;line-height:10.7px;font-size:6.7px;color:#6a4f08;letter-spacing:-0.491px;left:15.7px;">113</div>
<div style="left:31.0px;top:282.6px;width:30px;height:11px;background:#3e4246;border-radius:1.5px;"></div>
<div class="t" style="top:282.20px;line-height:13px;font-size:9px;color:#f4f4f4;font-weight:bold;left:32.50px;width:12px;text-align:center;">M</div>
<div class="t" style="top:282.20px;line-height:13px;font-size:9px;color:#f4f4f4;font-weight:bold;left:47.50px;width:12px;text-align:center;">S</div>
<div class="t" style="top:282.65px;line-height:12.5px;font-size:8.5px;color:#ffffff;font-weight:bold;letter-spacing:-0.340px;left:67.9px;">14_ElecGtr04 (D)</div>
<div style="left:66.0px;top:296.1px;width:29px;height:10.6px;background:#3e4246;border-radius:1.5px"></div>
<div style="left:97.0px;top:296.1px;width:29px;height:10.6px;background:#3e4246;border-radius:1.5px"></div>
<div style="left:128.0px;top:296.1px;width:30px;height:10.6px;background:#3e4246;border-radius:1.5px"></div>
<div style="left:160.0px;top:296.1px;width:13px;height:10.6px;background:#3e4246;border-radius:1.5px"></div>
<div style="left:70.5px;top:298.9px;width:5px;height:5px;background:#f0f0f0;border-radius:50%"></div>
<svg style="left:83.5px;top:297.90px" width="9" height="7" viewBox="0 0 12 10"><path d="M1 3.3 H3.6 L6.6 0.5 V9.5 L3.6 6.7 H1Z" fill="#f0f0f0"/><path d="M8.3 2.8 Q10 5 8.3 7.2" stroke="#f0f0f0" stroke-width="1.3" fill="none"/></svg>
<svg style="left:100.5px;top:297.50px" width="8" height="8" viewBox="0 0 9 10"><path d="M0.6 8 L8.4 2.4 M7.8 7 A3.7 3.7 0 1 1 8.2 4.3" fill="none" stroke="#f0f0f0" stroke-width="1.5"/></svg>
<svg style="left:115.0px;top:299.10px" width="8" height="5" viewBox="0 0 8 5"><ellipse cx="2.6" cy="2.5" rx="2" ry="1.8" fill="none" stroke="#c9cbcd" stroke-width="0.9"/><ellipse cx="5.4" cy="2.5" rx="2" ry="1.8" fill="none" stroke="#c9cbcd" stroke-width="0.9"/></svg>
<div class="t" style="top:295.80px;line-height:13px;font-size:9px;color:#f4f4f4;font-weight:bold;left:129.50px;width:12px;text-align:center;">R</div>
<div class="t" style="top:295.80px;line-height:13px;font-size:9px;color:#f4f4f4;font-weight:bold;left:145.00px;width:12px;text-align:center;">W</div>
<svg style="left:163.0px;top:298.10px" width="7" height="7"><path d="M0 0.8 H7 M0 2.6 H7 M0 4.4 H7 M0 6.2 H7" stroke="#e4e4e4" stroke-width="0.9"/></svg>
<div style="left:220.7px;top:280.1px;width:6.6px;height:28.8px;background:#000000;"></div>
<div style="left:221.5px;top:302.5px;width:1.9px;height:5.6px;background:#30b2d0;"></div>
<div style="left:224.0px;top:302.5px;width:1.9px;height:5.6px;background:#30b2d0;"></div>
<div style="left:221.0px;top:279.8px;width:6px;height:0.9px;background:#23323a;"></div>
<div style="left:27.5px;top:308.9px;width:193.5px;height:28.8px;background:#24282c;"></div>
<div style="left:2.5px;top:308.9px;width:25.3px;height:28.8px;background:#e8b73a;"></div>
<div style="left:0.5px;top:308.6px;width:220.5px;height:0.9px;background:#17191b;"></div>
<svg style="left:4.900000000000006px;top:312.60px" width="8.6" height="7.5" viewBox="0 0 8 7"><path d="M0 3.5 L4 2.2 L8 3.5 L4 4.8Z M4 0 L4.9 3.5 L4 7 L3.1 3.5Z M2.3 1.5 L2.9 3.5 L2.3 5.5 L1.7 3.5Z M5.7 1.5 L6.3 3.5 L5.7 5.5 L5.1 3.5Z" fill="#fff3bc"/></svg>
<div class="t" style="top:311.75px;line-height:10.7px;font-size:6.7px;color:#6a4f08;letter-spacing:-0.491px;left:15.7px;">114</div>
<div style="left:31.0px;top:311.4px;width:30px;height:11px;background:#3e4246;border-radius:1.5px;"></div>
<div class="t" style="top:311.00px;line-height:13px;font-size:9px;color:#f4f4f4;font-weight:bold;left:32.50px;width:12px;text-align:center;">M</div>
<div class="t" style="top:311.00px;line-height:13px;font-size:9px;color:#f4f4f4;font-weight:bold;left:47.50px;width:12px;text-align:center;">S</div>
<div class="t" style="top:311.45px;line-height:12.5px;font-size:8.5px;color:#ffffff;font-weight:bold;letter-spacing:-0.340px;left:67.9px;">14_ElecGtr04 (D)</div>
<div style="left:66.0px;top:324.9px;width:29px;height:10.6px;background:#3e4246;border-radius:1.5px"></div>
<div style="left:97.0px;top:324.9px;width:29px;height:10.6px;background:#3e4246;border-radius:1.5px"></div>
<div style="left:128.0px;top:324.9px;width:30px;height:10.6px;background:#3e4246;border-radius:1.5px"></div>
<div style="left:160.0px;top:324.9px;width:13px;height:10.6px;background:#3e4246;border-radius:1.5px"></div>
<div style="left:70.5px;top:327.7px;width:5px;height:5px;background:#f0f0f0;border-radius:50%"></div>
<svg style="left:83.5px;top:326.70px" width="9" height="7" viewBox="0 0 12 10"><path d="M1 3.3 H3.6 L6.6 0.5 V9.5 L3.6 6.7 H1Z" fill="#f0f0f0"/><path d="M8.3 2.8 Q10 5 8.3 7.2" stroke="#f0f0f0" stroke-width="1.3" fill="none"/></svg>
<svg style="left:100.5px;top:326.30px" width="8" height="8" viewBox="0 0 9 10"><path d="M0.6 8 L8.4 2.4 M7.8 7 A3.7 3.7 0 1 1 8.2 4.3" fill="none" stroke="#f0f0f0" stroke-width="1.5"/></svg>
<svg style="left:115.0px;top:327.90px" width="8" height="5" viewBox="0 0 8 5"><ellipse cx="2.6" cy="2.5" rx="2" ry="1.8" fill="none" stroke="#c9cbcd" stroke-width="0.9"/><ellipse cx="5.4" cy="2.5" rx="2" ry="1.8" fill="none" stroke="#c9cbcd" stroke-width="0.9"/></svg>
<div class="t" style="top:324.60px;line-height:13px;font-size:9px;color:#f4f4f4;font-weight:bold;left:129.50px;width:12px;text-align:center;">R</div>
<div class="t" style="top:324.60px;line-height:13px;font-size:9px;color:#f4f4f4;font-weight:bold;left:145.00px;width:12px;text-align:center;">W</div>
<svg style="left:163.0px;top:326.90px" width="7" height="7"><path d="M0 0.8 H7 M0 2.6 H7 M0 4.4 H7 M0 6.2 H7" stroke="#e4e4e4" stroke-width="0.9"/></svg>
<div style="left:220.7px;top:308.9px;width:6.6px;height:28.8px;background:#000000;"></div>
<div style="left:221.5px;top:331.3px;width:1.9px;height:5.6px;background:#30b2d0;"></div>
<div style="left:224.0px;top:331.3px;width:1.9px;height:5.6px;background:#30b2d0;"></div>
<div style="left:221.0px;top:308.6px;width:6px;height:0.9px;background:#23323a;"></div>
<div style="left:27.5px;top:337.7px;width:193.5px;height:28.8px;background:#24282c;"></div>
<div style="left:2.5px;top:337.7px;width:25.3px;height:28.8px;background:#e8b73a;"></div>
<div style="left:0.5px;top:337.4px;width:220.5px;height:0.9px;background:#17191b;"></div>
<svg style="left:4.900000000000006px;top:341.40px" width="8.6" height="7.5" viewBox="0 0 8 7"><path d="M0 3.5 L4 2.2 L8 3.5 L4 4.8Z M4 0 L4.9 3.5 L4 7 L3.1 3.5Z M2.3 1.5 L2.9 3.5 L2.3 5.5 L1.7 3.5Z M5.7 1.5 L6.3 3.5 L5.7 5.5 L5.1 3.5Z" fill="#fff3bc"/></svg>
<div class="t" style="top:340.55px;line-height:10.7px;font-size:6.7px;color:#6a4f08;letter-spacing:-0.491px;left:15.7px;">115</div>
<div style="left:31.0px;top:340.2px;width:30px;height:11px;background:#3e4246;border-radius:1.5px;"></div>
<div class="t" style="top:339.80px;line-height:13px;font-size:9px;color:#f4f4f4;font-weight:bold;left:32.50px;width:12px;text-align:center;">M</div>
<div class="t" style="top:339.80px;line-height:13px;font-size:9px;color:#f4f4f4;font-weight:bold;left:47.50px;width:12px;text-align:center;">S</div>
<div class="t" style="top:340.25px;line-height:12.5px;font-size:8.5px;color:#ffffff;font-weight:bold;letter-spacing:-0.340px;left:67.9px;">14_ElecGtr04 (D)</div>
<div style="left:66.0px;top:353.7px;width:29px;height:10.6px;background:#3e4246;border-radius:1.5px"></div>
<div style="left:97.0px;top:353.7px;width:29px;height:10.6px;background:#3e4246;border-radius:1.5px"></div>
<div style="left:128.0px;top:353.7px;width:30px;height:10.6px;background:#3e4246;border-radius:1.5px"></div>
<div style="left:160.0px;top:353.7px;width:13px;height:10.6px;background:#3e4246;border-radius:1.5px"></div>
<div style="left:70.5px;top:356.5px;width:5px;height:5px;background:#f0f0f0;border-radius:50%"></div>
<svg style="left:83.5px;top:355.50px" width="9" height="7" viewBox="0 0 12 10"><path d="M1 3.3 H3.6 L6.6 0.5 V9.5 L3.6 6.7 H1Z" fill="#f0f0f0"/><path d="M8.3 2.8 Q10 5 8.3 7.2" stroke="#f0f0f0" stroke-width="1.3" fill="none"/></svg>
<svg style="left:100.5px;top:355.10px" width="8" height="8" viewBox="0 0 9 10"><path d="M0.6 8 L8.4 2.4 M7.8 7 A3.7 3.7 0 1 1 8.2 4.3" fill="none" stroke="#f0f0f0" stroke-width="1.5"/></svg>
<svg style="left:115.0px;top:356.70px" width="8" height="5" viewBox="0 0 8 5"><ellipse cx="2.6" cy="2.5" rx="2" ry="1.8" fill="none" stroke="#c9cbcd" stroke-width="0.9"/><ellipse cx="5.4" cy="2.5" rx="2" ry="1.8" fill="none" stroke="#c9cbcd" stroke-width="0.9"/></svg>
<div class="t" style="top:353.40px;line-height:13px;font-size:9px;color:#f4f4f4;font-weight:bold;left:129.50px;width:12px;text-align:center;">R</div>
<div class="t" style="top:353.40px;line-height:13px;font-size:9px;color:#f4f4f4;font-weight:bold;left:145.00px;width:12px;text-align:center;">W</div>
<svg style="left:163.0px;top:355.70px" width="7" height="7"><path d="M0 0.8 H7 M0 2.6 H7 M0 4.4 H7 M0 6.2 H7" stroke="#e4e4e4" stroke-width="0.9"/></svg>
<div style="left:220.7px;top:337.7px;width:6.6px;height:28.8px;background:#000000;"></div>
<div style="left:221.5px;top:360.1px;width:1.9px;height:5.6px;background:#30b2d0;"></div>
<div style="left:224.0px;top:360.1px;width:1.9px;height:5.6px;background:#30b2d0;"></div>
<div style="left:221.0px;top:337.4px;width:6px;height:0.9px;background:#23323a;"></div>
<div style="left:27.5px;top:366.5px;width:193.5px;height:28.8px;background:#24282c;"></div>
<div style="left:2.5px;top:366.5px;width:25.3px;height:28.8px;background:#e8b73a;"></div>
<div style="left:0.5px;top:366.2px;width:220.5px;height:0.9px;background:#17191b;"></div>
<svg style="left:4.900000000000006px;top:370.20px" width="8.6" height="7.5" viewBox="0 0 8 7"><path d="M0 3.5 L4 2.2 L8 3.5 L4 4.8Z M4 0 L4.9 3.5 L4 7 L3.1 3.5Z M2.3 1.5 L2.9 3.5 L2.3 5.5 L1.7 3.5Z M5.7 1.5 L6.3 3.5 L5.7 5.5 L5.1 3.5Z" fill="#fff3bc"/></svg>
<div class="t" style="top:369.35px;line-height:10.7px;font-size:6.7px;color:#6a4f08;letter-spacing:-0.491px;left:15.7px;">116</div>
<div style="left:31.0px;top:369.0px;width:30px;height:11px;background:#3e4246;border-radius:1.5px;"></div>
<div class="t" style="top:368.60px;line-height:13px;font-size:9px;color:#f4f4f4;font-weight:bold;left:32.50px;width:12px;text-align:center;">M</div>
<div class="t" style="top:368.60px;line-height:13px;font-size:9px;color:#f4f4f4;font-weight:bold;left:47.50px;width:12px;text-align:center;">S</div>
<div class="t" style="top:369.05px;line-height:12.5px;font-size:8.5px;color:#ffffff;font-weight:bold;letter-spacing:-0.340px;left:67.9px;">14_ElecGtr04 (D)</div>
<div style="left:66.0px;top:382.5px;width:29px;height:10.6px;background:#3e4246;border-radius:1.5px"></div>
<div style="left:97.0px;top:382.5px;width:29px;height:10.6px;background:#3e4246;border-radius:1.5px"></div>
<div style="left:128.0px;top:382.5px;width:30px;height:10.6px;background:#3e4246;border-radius:1.5px"></div>
<div style="left:160.0px;top:382.5px;width:13px;height:10.6px;background:#3e4246;border-radius:1.5px"></div>
<div style="left:70.5px;top:385.3px;width:5px;height:5px;background:#f0f0f0;border-radius:50%"></div>
<svg style="left:83.5px;top:384.30px" width="9" height="7" viewBox="0 0 12 10"><path d="M1 3.3 H3.6 L6.6 0.5 V9.5 L3.6 6.7 H1Z" fill="#f0f0f0"/><path d="M8.3 2.8 Q10 5 8.3 7.2" stroke="#f0f0f0" stroke-width="1.3" fill="none"/></svg>
<svg style="left:100.5px;top:383.90px" width="8" height="8" viewBox="0 0 9 10"><path d="M0.6 8 L8.4 2.4 M7.8 7 A3.7 3.7 0 1 1 8.2 4.3" fill="none" stroke="#f0f0f0" stroke-width="1.5"/></svg>
<svg style="left:115.0px;top:385.50px" width="8" height="5" viewBox="0 0 8 5"><ellipse cx="2.6" cy="2.5" rx="2" ry="1.8" fill="none" stroke="#c9cbcd" stroke-width="0.9"/><ellipse cx="5.4" cy="2.5" rx="2" ry="1.8" fill="none" stroke="#c9cbcd" stroke-width="0.9"/></svg>
<div class="t" style="top:382.20px;line-height:13px;font-size:9px;color:#f4f4f4;font-weight:bold;left:129.50px;width:12px;text-align:center;">R</div>
<div class="t" style="top:382.20px;line-height:13px;font-size:9px;color:#f4f4f4;font-weight:bold;left:145.00px;width:12px;text-align:center;">W</div>
<svg style="left:163.0px;top:384.50px" width="7" height="7"><path d="M0 0.8 H7 M0 2.6 H7 M0 4.4 H7 M0 6.2 H7" stroke="#e4e4e4" stroke-width="0.9"/></svg>
<div style="left:220.7px;top:366.5px;width:6.6px;height:28.8px;background:#000000;"></div>
<div style="left:221.5px;top:388.9px;width:1.9px;height:5.6px;background:#30b2d0;"></div>
<div style="left:224.0px;top:388.9px;width:1.9px;height:5.6px;background:#30b2d0;"></div>
<div style="left:221.0px;top:366.2px;width:6px;height:0.9px;background:#23323a;"></div>
<div style="left:27.5px;top:395.3px;width:193.5px;height:28.8px;background:#6d6f72;"></div>
<div style="left:2.5px;top:395.3px;width:25.3px;height:28.8px;background:#e8b73a;"></div>
<div style="left:0.5px;top:395.0px;width:220.5px;height:0.9px;background:#17191b;"></div>
<svg style="left:4.900000000000006px;top:399.00px" width="8.6" height="7.5" viewBox="0 0 8 7"><path d="M0 3.5 L4 2.2 L8 3.5 L4 4.8Z M4 0 L4.9 3.5 L4 7 L3.1 3.5Z M2.3 1.5 L2.9 3.5 L2.3 5.5 L1.7 3.5Z M5.7 1.5 L6.3 3.5 L5.7 5.5 L5.1 3.5Z" fill="#fff3bc"/></svg>
<div class="t" style="top:398.15px;line-height:10.7px;font-size:6.7px;color:#6a4f08;letter-spacing:-0.491px;left:15.7px;">117</div>
<div style="left:31.0px;top:397.8px;width:30px;height:11px;background:#7a7c7f;border-radius:1.5px;border:1px solid #9a9c9e;"></div>
<div class="t" style="top:397.40px;line-height:13px;font-size:9px;color:#f4f4f4;font-weight:bold;left:32.50px;width:12px;text-align:center;">M</div>
<div class="t" style="top:397.40px;line-height:13px;font-size:9px;color:#f4f4f4;font-weight:bold;left:47.50px;width:12px;text-align:center;">S</div>
<div class="t" style="top:397.85px;line-height:12.5px;font-size:8.5px;color:#ffffff;font-weight:bold;letter-spacing:-0.340px;left:67.9px;">14_ElecGtr04 (D)</div>
<div style="left:66.0px;top:411.3px;width:29px;height:10.6px;background:#7a7c7f;border-radius:1.5px"></div>
<div style="left:97.0px;top:411.3px;width:29px;height:10.6px;background:#7a7c7f;border-radius:1.5px"></div>
<div style="left:128.0px;top:411.3px;width:30px;height:10.6px;background:#7a7c7f;border-radius:1.5px"></div>
<div style="left:160.0px;top:411.3px;width:13px;height:10.6px;background:#7a7c7f;border-radius:1.5px"></div>
<div style="left:66.0px;top:411.0px;width:14px;height:11.2px;background:#cf3a40;border-radius:1.5px"></div>
<div style="left:70.3px;top:413.9px;width:5.4px;height:5.4px;background:#1a0808;border-radius:50%"></div>
<div style="left:33.0px;top:410.8px;width:10px;height:11px;background:#75777a;border:1px solid #808284;border-radius:1px"></div>
<svg style="left:83.5px;top:413.10px" width="9" height="7" viewBox="0 0 12 10"><path d="M1 3.3 H3.6 L6.6 0.5 V9.5 L3.6 6.7 H1Z" fill="#f0f0f0"/><path d="M8.3 2.8 Q10 5 8.3 7.2" stroke="#f0f0f0" stroke-width="1.3" fill="none"/></svg>
<svg style="left:100.5px;top:412.70px" width="8" height="8" viewBox="0 0 9 10"><path d="M0.6 8 L8.4 2.4 M7.8 7 A3.7 3.7 0 1 1 8.2 4.3" fill="none" stroke="#f0f0f0" stroke-width="1.5"/></svg>
<svg style="left:115.0px;top:414.30px" width="8" height="5" viewBox="0 0 8 5"><ellipse cx="2.6" cy="2.5" rx="2" ry="1.8" fill="none" stroke="#c9cbcd" stroke-width="0.9"/><ellipse cx="5.4" cy="2.5" rx="2" ry="1.8" fill="none" stroke="#c9cbcd" stroke-width="0.9"/></svg>
<div class="t" style="top:411.00px;line-height:13px;font-size:9px;color:#f4f4f4;font-weight:bold;left:129.50px;width:12px;text-align:center;">R</div>
<div class="t" style="top:411.00px;line-height:13px;font-size:9px;color:#f4f4f4;font-weight:bold;left:145.00px;width:12px;text-align:center;">W</div>
<svg style="left:163.0px;top:413.30px" width="7" height="7"><path d="M0 0.8 H7 M0 2.6 H7 M0 4.4 H7 M0 6.2 H7" stroke="#e4e4e4" stroke-width="0.9"/></svg>
<div style="left:220.7px;top:395.3px;width:6.6px;height:28.8px;background:#000000;"></div>
<div style="left:221.5px;top:417.7px;width:1.9px;height:5.6px;background:#30b2d0;"></div>
<div style="left:224.0px;top:417.7px;width:1.9px;height:5.6px;background:#30b2d0;"></div>
<div style="left:221.0px;top:395.0px;width:6px;height:0.9px;background:#23323a;"></div>
<div style="left:0.5px;top:424.1px;width:227px;height:40px;background:#24282c;"></div>
<div style="left:227.3px;top:0.0px;width:0.6px;height:453px;background:#2a2d31;"></div>
<div style="left:227.8px;top:0.0px;width:1.9px;height:453px;background:#565a5e;"></div>
<div style="left:229.7px;top:0.0px;width:5.1px;height:453px;background:#26292d;"></div>
<div style="left:234.8px;top:424.1px;width:685.9000000000001px;height:28.700000000000045px;background:#262a2f;"></div>
<div style="left:533.3px;top:424.1px;width:305.3px;height:28.700000000000045px;background:#28313e;"></div>
<div style="left:234.8px;top:0.0px;width:685.9000000000001px;height:424.09999999999997px;background:#e8b73a;"></div>
<div style="left:234.8px;top:366.5px;width:685.9000000000001px;height:28.8px;background:linear-gradient(180deg,#f0c24a 0%,#e3b033 50%,#e9b93c 100%);"></div>
<div style="left:234.4px;top:0.0px;width:0.9px;height:424.09999999999997px;background:rgba(120,88,10,0.38);"></div>
<div style="left:233.5px;top:0.0px;width:0.9px;height:424.09999999999997px;background:rgba(255,240,170,0.25);"></div>
<div style="left:234.3px;top:424.1px;width:1px;height:28.700000000000045px;background:#5d6165;"></div>
<div style="left:282.91px;top:0.0px;width:0.9px;height:424.09999999999997px;background:rgba(120,88,10,0.38);"></div>
<div style="left:282.01px;top:0.0px;width:0.9px;height:424.09999999999997px;background:rgba(255,240,170,0.25);"></div>
<div style="left:282.81px;top:424.1px;width:1px;height:28.700000000000045px;background:#5d6165;"></div>
<div style="left:331.42px;top:0.0px;width:0.9px;height:424.09999999999997px;background:rgba(120,88,10,0.38);"></div>
<div style="left:330.52px;top:0.0px;width:0.9px;height:424.09999999999997px;background:rgba(255,240,170,0.25);"></div>
<div style="left:331.32px;top:424.1px;width:1px;height:28.700000000000045px;background:#5d6165;"></div>
<div style="left:379.93px;top:0.0px;width:0.9px;height:424.09999999999997px;background:rgba(120,88,10,0.38);"></div>
<div style="left:379.03px;top:0.0px;width:0.9px;height:424.09999999999997px;background:rgba(255,240,170,0.25);"></div>
<div style="left:379.83px;top:424.1px;width:1px;height:28.700000000000045px;background:#5d6165;"></div>
<div style="left:428.44px;top:0.0px;width:0.9px;height:424.09999999999997px;background:rgba(120,88,10,0.38);"></div>
<div style="left:427.54px;top:0.0px;width:0.9px;height:424.09999999999997px;background:rgba(255,240,170,0.25);"></div>
<div style="left:428.34px;top:424.1px;width:1px;height:28.700000000000045px;background:#5d6165;"></div>
<div style="left:476.95px;top:0.0px;width:0.9px;height:424.09999999999997px;background:rgba(120,88,10,0.38);"></div>
<div style="left:476.05px;top:0.0px;width:0.9px;height:424.09999999999997px;background:rgba(255,240,170,0.25);"></div>
<div style="left:476.85px;top:424.1px;width:1px;height:28.700000000000045px;background:#5d6165;"></div>
<div style="left:525.46px;top:0.0px;width:0.9px;height:424.09999999999997px;background:rgba(120,88,10,0.38);"></div>
<div style="left:524.56px;top:0.0px;width:0.9px;height:424.09999999999997px;background:rgba(255,240,170,0.25);"></div>
<div style="left:525.36px;top:424.1px;width:1px;height:28.700000000000045px;background:#5d6165;"></div>
<div style="left:573.97px;top:0.0px;width:0.9px;height:424.09999999999997px;background:rgba(120,88,10,0.38);"></div>
<div style="left:573.07px;top:0.0px;width:0.9px;height:424.09999999999997px;background:rgba(255,240,170,0.25);"></div>
<div style="left:573.87px;top:424.1px;width:1px;height:28.700000000000045px;background:#5d6165;"></div>
<div style="left:622.48px;top:0.0px;width:0.9px;height:424.09999999999997px;background:rgba(120,88,10,0.38);"></div>
<div style="left:621.58px;top:0.0px;width:0.9px;height:424.09999999999997px;background:rgba(255,240,170,0.25);"></div>
<div style="left:622.38px;top:424.1px;width:1px;height:28.700000000000045px;background:#5d6165;"></div>
<div style="left:670.99px;top:0.0px;width:0.9px;height:424.09999999999997px;background:rgba(120,88,10,0.38);"></div>
<div style="left:670.09px;top:0.0px;width:0.9px;height:424.09999999999997px;background:rgba(255,240,170,0.25);"></div>
<div style="left:670.89px;top:424.1px;width:1px;height:28.700000000000045px;background:#5d6165;"></div>
<div style="left:719.5px;top:0.0px;width:0.9px;height:424.09999999999997px;background:rgba(120,88,10,0.38);"></div>
<div style="left:718.6px;top:0.0px;width:0.9px;height:424.09999999999997px;background:rgba(255,240,170,0.25);"></div>
<div style="left:719.4px;top:424.1px;width:1px;height:28.700000000000045px;background:#5d6165;"></div>
<div style="left:768.01px;top:0.0px;width:0.9px;height:424.09999999999997px;background:rgba(120,88,10,0.38);"></div>
<div style="left:767.11px;top:0.0px;width:0.9px;height:424.09999999999997px;background:rgba(255,240,170,0.25);"></div>
<div style="left:767.91px;top:424.1px;width:1px;height:28.700000000000045px;background:#5d6165;"></div>
<div style="left:816.52px;top:0.0px;width:0.9px;height:424.09999999999997px;background:rgba(120,88,10,0.38);"></div>
<div style="left:815.62px;top:0.0px;width:0.9px;height:424.09999999999997px;background:rgba(255,240,170,0.25);"></div>
<div style="left:816.42px;top:424.1px;width:1px;height:28.700000000000045px;background:#5d6165;"></div>
<div style="left:865.03px;top:0.0px;width:0.9px;height:424.09999999999997px;background:rgba(120,88,10,0.38);"></div>
<div style="left:864.13px;top:0.0px;width:0.9px;height:424.09999999999997px;background:rgba(255,240,170,0.25);"></div>
<div style="left:864.93px;top:424.1px;width:1px;height:28.700000000000045px;background:#5d6165;"></div>
<div style="left:913.54px;top:0.0px;width:0.9px;height:424.09999999999997px;background:rgba(120,88,10,0.38);"></div>
<div style="left:912.64px;top:0.0px;width:0.9px;height:424.09999999999997px;background:rgba(255,240,170,0.25);"></div>
<div style="left:913.44px;top:424.1px;width:1px;height:28.700000000000045px;background:#5d6165;"></div>
<div style="left:234.8px;top:-8.9px;width:685.9000000000001px;height:2.6px;background:#4a3a06;"></div>
<div style="left:234.8px;top:0.9px;width:685.9000000000001px;height:1.0px;background:#76560e;"></div>
<div style="left:501.3px;top:0.2px;width:358.5px;height:2.4px;background:#553a0a;border-radius:1px"></div>
<div style="left:234.8px;top:12.9px;width:685.9000000000001px;height:1.0px;background:#604608;"></div>
<div style="left:501.3px;top:12.2px;width:358.5px;height:2.4px;background:#553a0a;border-radius:1px"></div>
<div style="left:234.8px;top:19.9px;width:685.9000000000001px;height:2.6px;background:#4a3a06;"></div>
<div style="left:234.8px;top:29.7px;width:685.9000000000001px;height:1.0px;background:#76560e;"></div>
<div style="left:501.3px;top:29.0px;width:358.5px;height:2.4px;background:#553a0a;border-radius:1px"></div>
<div style="left:234.8px;top:41.7px;width:685.9000000000001px;height:1.0px;background:#604608;"></div>
<div style="left:501.3px;top:41.0px;width:358.5px;height:2.4px;background:#553a0a;border-radius:1px"></div>
<div class="t" style="top:26.40px;line-height:6px;font-size:6.8px;color:#2a1e04;font-weight:bold;letter-spacing:-0.207px;left:234.8px;background:#e8b73a;padding:0 2px 0 3.6px;">14_ElecGtr04</div>
<div style="left:234.8px;top:48.7px;width:685.9000000000001px;height:2.6px;background:#4a3a06;"></div>
<div style="left:234.8px;top:58.5px;width:685.9000000000001px;height:1.0px;background:#76560e;"></div>
<div style="left:501.3px;top:57.8px;width:358.5px;height:2.4px;background:#553a0a;border-radius:1px"></div>
<div style="left:234.8px;top:70.5px;width:685.9000000000001px;height:1.0px;background:#604608;"></div>
<div style="left:501.3px;top:69.8px;width:358.5px;height:2.4px;background:#553a0a;border-radius:1px"></div>
<div class="t" style="top:55.20px;line-height:6px;font-size:6.8px;color:#2a1e04;font-weight:bold;letter-spacing:-0.207px;left:234.8px;background:#e8b73a;padding:0 2px 0 3.6px;">14_ElecGtr04</div>
<div style="left:234.8px;top:77.5px;width:685.9000000000001px;height:2.6px;background:#4a3a06;"></div>
<div style="left:234.8px;top:87.3px;width:685.9000000000001px;height:1.0px;background:#76560e;"></div>
<div style="left:501.3px;top:86.6px;width:358.5px;height:2.4px;background:#553a0a;border-radius:1px"></div>
<div style="left:234.8px;top:99.3px;width:685.9000000000001px;height:1.0px;background:#604608;"></div>
<div style="left:501.3px;top:98.6px;width:358.5px;height:2.4px;background:#553a0a;border-radius:1px"></div>
<div class="t" style="top:84.00px;line-height:6px;font-size:6.8px;color:#2a1e04;font-weight:bold;letter-spacing:-0.207px;left:234.8px;background:#e8b73a;padding:0 2px 0 3.6px;">14_ElecGtr04</div>
<div style="left:234.8px;top:106.3px;width:685.9000000000001px;height:2.6px;background:#4a3a06;"></div>
<div style="left:234.8px;top:116.1px;width:685.9000000000001px;height:1.0px;background:#76560e;"></div>
<div style="left:501.3px;top:115.4px;width:358.5px;height:2.4px;background:#553a0a;border-radius:1px"></div>
<div style="left:234.8px;top:128.1px;width:685.9000000000001px;height:1.0px;background:#604608;"></div>
<div style="left:501.3px;top:127.4px;width:358.5px;height:2.4px;background:#553a0a;border-radius:1px"></div>
<div class="t" style="top:112.80px;line-height:6px;font-size:6.8px;color:#2a1e04;font-weight:bold;letter-spacing:-0.207px;left:234.8px;background:#e8b73a;padding:0 2px 0 3.6px;">14_ElecGtr04</div>
<div style="left:234.8px;top:135.1px;width:685.9000000000001px;height:2.6px;background:#4a3a06;"></div>
<div style="left:234.8px;top:144.9px;width:685.9000000000001px;height:1.0px;background:#76560e;"></div>
<div style="left:501.3px;top:144.2px;width:358.5px;height:2.4px;background:#553a0a;border-radius:1px"></div>
<div style="left:234.8px;top:156.9px;width:685.9000000000001px;height:1.0px;background:#604608;"></div>
<div style="left:501.3px;top:156.2px;width:358.5px;height:2.4px;background:#553a0a;border-radius:1px"></div>
<div class="t" style="top:141.60px;line-height:6px;font-size:6.8px;color:#2a1e04;font-weight:bold;letter-spacing:-0.207px;left:234.8px;background:#e8b73a;padding:0 2px 0 3.6px;">14_ElecGtr04</div>
<div style="left:234.8px;top:163.9px;width:685.9000000000001px;height:2.6px;background:#4a3a06;"></div>
<div style="left:234.8px;top:173.7px;width:685.9000000000001px;height:1.0px;background:#76560e;"></div>
<div style="left:501.3px;top:173.0px;width:358.5px;height:2.4px;background:#553a0a;border-radius:1px"></div>
<div style="left:234.8px;top:185.7px;width:685.9000000000001px;height:1.0px;background:#604608;"></div>
<div style="left:501.3px;top:185.0px;width:358.5px;height:2.4px;background:#553a0a;border-radius:1px"></div>
<div class="t" style="top:170.40px;line-height:6px;font-size:6.8px;color:#2a1e04;font-weight:bold;letter-spacing:-0.207px;left:234.8px;background:#e8b73a;padding:0 2px 0 3.6px;">14_ElecGtr04</div>
<div style="left:234.8px;top:192.7px;width:685.9000000000001px;height:2.6px;background:#4a3a06;"></div>
<div style="left:234.8px;top:202.5px;width:685.9000000000001px;height:1.0px;background:#76560e;"></div>
<div style="left:501.3px;top:201.8px;width:358.5px;height:2.4px;background:#553a0a;border-radius:1px"></div>
<div style="left:234.8px;top:214.5px;width:685.9000000000001px;height:1.0px;background:#604608;"></div>
<div style="left:501.3px;top:213.8px;width:358.5px;height:2.4px;background:#553a0a;border-radius:1px"></div>
<div class="t" style="top:199.20px;line-height:6px;font-size:6.8px;color:#2a1e04;font-weight:bold;letter-spacing:-0.207px;left:234.8px;background:#e8b73a;padding:0 2px 0 3.6px;">14_ElecGtr04</div>
<div style="left:234.8px;top:221.5px;width:685.9000000000001px;height:2.6px;background:#4a3a06;"></div>
<div style="left:234.8px;top:231.3px;width:685.9000000000001px;height:1.0px;background:#76560e;"></div>
<div style="left:501.3px;top:230.6px;width:358.5px;height:2.4px;background:#553a0a;border-radius:1px"></div>
<div style="left:234.8px;top:243.3px;width:685.9000000000001px;height:1.0px;background:#604608;"></div>
<div style="left:501.3px;top:242.6px;width:358.5px;height:2.4px;background:#553a0a;border-radius:1px"></div>
<div class="t" style="top:228.00px;line-height:6px;font-size:6.8px;color:#2a1e04;font-weight:bold;letter-spacing:-0.207px;left:234.8px;background:#e8b73a;padding:0 2px 0 3.6px;">14_ElecGtr04</div>
<div style="left:234.8px;top:250.3px;width:685.9000000000001px;height:2.6px;background:#4a3a06;"></div>
<div style="left:234.8px;top:260.1px;width:685.9000000000001px;height:1.0px;background:#76560e;"></div>
<div style="left:501.3px;top:259.4px;width:358.5px;height:2.4px;background:#553a0a;border-radius:1px"></div>
<div style="left:234.8px;top:272.1px;width:685.9000000000001px;height:1.0px;background:#604608;"></div>
<div style="left:501.3px;top:271.4px;width:358.5px;height:2.4px;background:#553a0a;border-radius:1px"></div>
<div class="t" style="top:256.80px;line-height:6px;font-size:6.8px;color:#2a1e04;font-weight:bold;letter-spacing:-0.207px;left:234.8px;background:#e8b73a;padding:0 2px 0 3.6px;">14_ElecGtr04</div>
<div style="left:234.8px;top:279.1px;width:685.9000000000001px;height:2.6px;background:#4a3a06;"></div>
<div style="left:234.8px;top:288.9px;width:685.9000000000001px;height:1.0px;background:#76560e;"></div>
<div style="left:501.3px;top:288.2px;width:358.5px;height:2.4px;background:#553a0a;border-radius:1px"></div>
<div style="left:234.8px;top:300.9px;width:685.9000000000001px;height:1.0px;background:#604608;"></div>
<div style="left:501.3px;top:300.2px;width:358.5px;height:2.4px;background:#553a0a;border-radius:1px"></div>
<div class="t" style="top:285.60px;line-height:6px;font-size:6.8px;color:#2a1e04;font-weight:bold;letter-spacing:-0.207px;left:234.8px;background:#e8b73a;padding:0 2px 0 3.6px;">14_ElecGtr04</div>
<div style="left:234.8px;top:307.9px;width:685.9000000000001px;height:2.6px;background:#4a3a06;"></div>
<div style="left:234.8px;top:317.7px;width:685.9000000000001px;height:1.0px;background:#76560e;"></div>
<div style="left:501.3px;top:317.0px;width:358.5px;height:2.4px;background:#553a0a;border-radius:1px"></div>
<div style="left:234.8px;top:329.7px;width:685.9000000000001px;height:1.0px;background:#604608;"></div>
<div style="left:501.3px;top:329.0px;width:358.5px;height:2.4px;background:#553a0a;border-radius:1px"></div>
<div class="t" style="top:314.40px;line-height:6px;font-size:6.8px;color:#2a1e04;font-weight:bold;letter-spacing:-0.207px;left:234.8px;background:#e8b73a;padding:0 2px 0 3.6px;">14_ElecGtr04</div>
<div style="left:234.8px;top:336.7px;width:685.9000000000001px;height:2.6px;background:#4a3a06;"></div>
<div style="left:234.8px;top:346.5px;width:685.9000000000001px;height:1.0px;background:#76560e;"></div>
<div style="left:501.3px;top:345.8px;width:358.5px;height:2.4px;background:#553a0a;border-radius:1px"></div>
<div style="left:234.8px;top:358.5px;width:685.9000000000001px;height:1.0px;background:#604608;"></div>
<div style="left:501.3px;top:357.8px;width:358.5px;height:2.4px;background:#553a0a;border-radius:1px"></div>
<div class="t" style="top:343.20px;line-height:6px;font-size:6.8px;color:#2a1e04;font-weight:bold;letter-spacing:-0.207px;left:234.8px;background:#e8b73a;padding:0 2px 0 3.6px;">14_ElecGtr04</div>
<div style="left:234.8px;top:365.5px;width:685.9000000000001px;height:2.6px;background:#4a3a06;"></div>
<div style="left:234.8px;top:375.3px;width:685.9000000000001px;height:1.0px;background:#76560e;"></div>
<div style="left:501.3px;top:374.6px;width:358.5px;height:2.4px;background:#553a0a;border-radius:1px"></div>
<div style="left:234.8px;top:387.3px;width:685.9000000000001px;height:1.0px;background:#604608;"></div>
<div style="left:501.3px;top:386.6px;width:358.5px;height:2.4px;background:#553a0a;border-radius:1px"></div>
<div class="t" style="top:372.00px;line-height:6px;font-size:6.8px;color:#2a1e04;font-weight:bold;letter-spacing:-0.207px;left:234.8px;background:#eebf46;padding:0 2px 0 3.6px;">14_ElecGtr04</div>
<div style="left:234.8px;top:394.3px;width:685.9000000000001px;height:2.6px;background:#4a3a06;"></div>
<div style="left:234.8px;top:404.1px;width:685.9000000000001px;height:1.0px;background:#76560e;"></div>
<div style="left:501.3px;top:403.4px;width:358.5px;height:2.4px;background:#553a0a;border-radius:1px"></div>
<div style="left:234.8px;top:416.1px;width:685.9000000000001px;height:1.0px;background:#604608;"></div>
<div style="left:501.3px;top:415.4px;width:358.5px;height:2.4px;background:#553a0a;border-radius:1px"></div>
<div class="t" style="top:400.80px;line-height:6px;font-size:6.8px;color:#2a1e04;font-weight:bold;letter-spacing:-0.207px;left:234.8px;background:#e8b73a;padding:0 2px 0 3.6px;">14_ElecGtr04</div>
<div class="t" style="top:-2.40px;line-height:6px;font-size:6.8px;color:#2a1e04;font-weight:bold;letter-spacing:-0.207px;left:234.8px;background:#e8b73a;padding:0 2px 0 3.6px;">14_ElecGtr04</div>
<svg style="left:234.80px;top:368.00px" width="4" height="4"><path d="M0 0 H4 L0 4Z" fill="#fff7e0"/></svg>
<div style="left:236.1px;top:390.2px;width:3.2px;height:2.8px;background:#54440c;"></div>
<div style="left:808.3px;top:0.0px;width:1.4px;height:453px;background:#2a2208;"></div>
<div style="left:807.5px;top:0.0px;width:0.8px;height:453px;background:rgba(255,244,200,0.6);"></div>
<div style="left:809.7px;top:0.0px;width:0.8px;height:453px;background:rgba(255,244,200,0.6);"></div>
<div style="left:807.4px;top:424.1px;width:3.2px;height:28.700000000000045px;background:#262a2f;"></div>
<div style="left:808.1px;top:424.1px;width:1.7px;height:28.700000000000045px;background:#d8dadc;"></div>
</div>
<div style="left:352.2px;top:88px;width:691.3px;height:16.5px;background:#1c1f22;"></div>
<div style="left:349.8px;top:88px;width:2.4px;height:16.5px;background:#565a5e;"></div>
<div style="left:349.8px;top:88px;width:0.5px;height:16.5px;background:#2a2d31;"></div>
<div style="left:655.8px;top:88px;width:305.3px;height:16.5px;background:#7567e8;"></div>
<div style="left:356.8px;top:89px;width:1px;height:15.5px;background:#e0e0e0;"></div>
<div class="t" style="top:94.30px;line-height:12px;font-size:8px;color:#ffffff;font-weight:bold;left:360.1px;">1</div>
<div style="left:405.31px;top:89px;width:1px;height:15.5px;background:#e0e0e0;"></div>
<div class="t" style="top:94.30px;line-height:12px;font-size:8px;color:#ffffff;font-weight:bold;left:408.61px;">3</div>
<div style="left:453.82px;top:89px;width:1px;height:15.5px;background:#e0e0e0;"></div>
<div class="t" style="top:94.30px;line-height:12px;font-size:8px;color:#ffffff;font-weight:bold;left:457.12px;">5</div>
<div style="left:502.33px;top:89px;width:1px;height:15.5px;background:#e0e0e0;"></div>
<div class="t" style="top:94.30px;line-height:12px;font-size:8px;color:#ffffff;font-weight:bold;left:505.63px;">7</div>
<div style="left:550.84px;top:89px;width:1px;height:15.5px;background:#e0e0e0;"></div>
<div class="t" style="top:94.30px;line-height:12px;font-size:8px;color:#ffffff;font-weight:bold;left:554.14px;">9</div>
<div style="left:599.35px;top:89px;width:1px;height:15.5px;background:#e0e0e0;"></div>
<div class="t" style="top:94.30px;line-height:12px;font-size:8px;color:#ffffff;font-weight:bold;left:602.65px;">11</div>
<div style="left:647.86px;top:89px;width:1px;height:15.5px;background:#e0e0e0;"></div>
<div class="t" style="top:94.30px;line-height:12px;font-size:8px;color:#ffffff;font-weight:bold;left:651.16px;">13</div>
<div style="left:696.37px;top:89px;width:1px;height:15.5px;background:#d9dcf8;"></div>
<div class="t" style="top:94.30px;line-height:12px;font-size:8px;color:#ffffff;font-weight:bold;left:699.67px;">15</div>
<div style="left:744.88px;top:89px;width:1px;height:15.5px;background:#d9dcf8;"></div>
<div class="t" style="top:94.30px;line-height:12px;font-size:8px;color:#ffffff;font-weight:bold;left:748.18px;">17</div>
<div style="left:793.39px;top:89px;width:1px;height:15.5px;background:#d9dcf8;"></div>
<div class="t" style="top:94.30px;line-height:12px;font-size:8px;color:#ffffff;font-weight:bold;left:796.69px;">19</div>
<div style="left:841.9px;top:89px;width:1px;height:15.5px;background:#d9dcf8;"></div>
<div class="t" style="top:94.30px;line-height:12px;font-size:8px;color:#ffffff;font-weight:bold;left:845.2px;">21</div>
<div style="left:890.41px;top:89px;width:1px;height:15.5px;background:#d9dcf8;"></div>
<div class="t" style="top:94.30px;line-height:12px;font-size:8px;color:#ffffff;font-weight:bold;left:893.71px;">23</div>
<div style="left:938.92px;top:89px;width:1px;height:15.5px;background:#d9dcf8;"></div>
<div class="t" style="top:94.30px;line-height:12px;font-size:8px;color:#ffffff;font-weight:bold;left:942.22px;">25</div>
<div style="left:987.43px;top:89px;width:1px;height:15.5px;background:#e0e0e0;"></div>
<div class="t" style="top:94.30px;line-height:12px;font-size:8px;color:#ffffff;font-weight:bold;left:990.73px;">27</div>
<div style="left:1035.94px;top:89px;width:1px;height:15.5px;background:#e0e0e0;"></div>
<svg style="left:655.8px;top:88px" width="5.5" height="5.5"><path d="M0 0 H5.5 L0 5.5Z" fill="#f8f8f8"/></svg>
<svg style="left:955.6px;top:88px" width="5.5" height="5.5"><path d="M0 0 H5.5 V5.5Z" fill="#f8f8f8"/></svg>
<div style="left:931px;top:88px;width:1.4px;height:16.5px;background:#101214;"></div>
<div style="left:930.3px;top:88px;width:0.7px;height:16.5px;background:rgba(255,255,255,0.35);"></div>
<div style="left:932.4px;top:88px;width:0.7px;height:16.5px;background:rgba(255,255,255,0.35);"></div>
<div style="left:1037.5px;top:97px;width:1px;height:1.2px;background:#d0d0d0;"></div>
<div style="left:1037.5px;top:100.5px;width:1px;height:1.2px;background:#d0d0d0;"></div>
<div style="left:1043.2px;top:88px;width:9.8px;height:469px;background:#32363a;"></div>
<div style="left:1044px;top:90px;width:8px;height:13px;background:#4a4e52;border-radius:1.5px"></div>
<svg style="left:1045.7px;top:95px" width="5" height="5"><path d="M0 0.3 L5 0.3 L2.5 4.7Z" fill="#f0f0f0"/></svg>
<svg style="left:1044.5px;top:105.5px" width="6" height="6"><path d="M0.8 5.2 L5 1" stroke="#e8e8e8" stroke-width="1.3"/></svg>
<div style="left:1047.3px;top:114px;width:1px;height:24px;background:#55595d;"></div>
<div style="left:1045.2px;top:138px;width:5px;height:5px;background:#f4f4f4;border-radius:50%"></div>
<svg style="left:1044.8px;top:148px" width="6" height="4"><path d="M0.5 3.5 L3 0.8 L5.5 3.5" stroke="#d8d8d8" stroke-width="1" fill="none"/></svg>
<div style="left:1045.3px;top:443px;width:4.6px;height:40px;background:#f2f2f2;border-radius:2.3px"></div>
<svg style="left:1044.8px;top:486px" width="6" height="4"><path d="M0.5 0.5 L3 3.2 L5.5 0.5" stroke="#d8d8d8" stroke-width="1" fill="none"/></svg>
<div style="left:1043.8px;top:493px;width:8.4px;height:11px;background:#3c4144;border-radius:1.5px"></div>
<svg style="left:1045.6px;top:497px" width="5" height="5"><path d="M0 0.3 L5 0.3 L2.5 4.7Z" fill="#f0f0f0"/></svg>
<div style="left:1044.5px;top:509.2px;width:5.5px;height:1.2px;background:#f2f2f2;"></div>
<div style="left:1046.8px;top:512px;width:1px;height:38px;background:#55595d;"></div>
<div style="left:1044.7px;top:515.5px;width:5px;height:5px;background:#f4f4f4;border-radius:50%"></div>
<svg style="left:1044.3px;top:550.5px" width="6" height="6"><path d="M3 0.3 V5.7 M0.3 3 H5.7" stroke="#f2f2f2" stroke-width="1.2"/></svg>
<div style="left:122.5px;top:557px;width:930px;height:10px;background:#24282c;"></div>
<div style="left:349.5px;top:557px;width:703px;height:9.5px;background:#3a3e42;"></div>
<div style="left:349.5px;top:557px;width:0.8px;height:9.5px;background:#2a2d31;"></div>
<div style="left:350.3px;top:557px;width:1.9px;height:9.5px;background:#565a5e;"></div>
<svg style="left:355px;top:559.3px" width="4" height="5"><path d="M3.3 0.5 L0.8 2.5 L3.3 4.5" stroke="#e8e8e8" stroke-width="1" fill="none"/></svg>
<div style="left:363.5px;top:558px;width:54.5px;height:6.4px;background:#f4f4f4;border-radius:3.2px"></div>
<svg style="left:971px;top:559.3px" width="4" height="5"><path d="M0.7 0.5 L3.2 2.5 L0.7 4.5" stroke="#b8b8b8" stroke-width="1" fill="none"/></svg>
<div style="left:980px;top:557.5px;width:8.5px;height:8.5px;background:#2a2d31;border-radius:1.5px"></div>
<svg style="left:982px;top:560px" width="5" height="5"><path d="M0 0.3 L5 0.3 L2.5 4.7Z" fill="#f0f0f0"/></svg>
<div style="left:991.5px;top:561.2px;width:5.5px;height:1.3px;background:#f2f2f2;"></div>
<div style="left:1000px;top:561.5px;width:32px;height:0.9px;background:#6a6e72;"></div>
<div style="left:1007.2px;top:559.2px;width:5.2px;height:5.2px;background:#f4f4f4;border-radius:50%"></div>
<svg style="left:1035px;top:558.8px" width="6" height="6"><path d="M3 0.3 V5.7 M0.3 3 H5.7" stroke="#f2f2f2" stroke-width="1.2"/></svg>
<svg style="left:325.5px;top:559.5px" width="6" height="5"><path d="M0 0.3 L6 0.3 L3 4.7Z" fill="#6a6e72"/></svg>
<svg style="left:337px;top:557.5px" width="8" height="8" viewBox="0 0 8 8"><circle cx="4" cy="4" r="2.2" fill="none" stroke="#a9acaf" stroke-width="1.5"/><path d="M4 0.3 V7.7 M0.3 4 H7.7 M1.4 1.4 L6.6 6.6 M6.6 1.4 L1.4 6.6" stroke="#a9acaf" stroke-width="0.9"/><circle cx="4" cy="4" r="1" fill="#24282c"/></svg>
<div style="left:130px;top:561.5px;width:2px;height:1px;background:#55595d;"></div>
<div style="left:120.3px;top:85.7px;width:934.2px;height:483.2px;border:1.7px solid #d4d6d8;border-radius:5px"></div>
<div style="left:1056.5px;top:99px;width:142.3px;height:457px;background:#24282c;border:1px solid #4a4f54;border-radius:4px 4px 4px 0"></div>
<div style="left:1130px;top:86px;width:31.5px;height:14px;background:#24282c;border:1px solid #4a4f54;border-bottom:none;border-radius:4px 4px 0 0"></div>
<div class="t" style="top:88.10px;line-height:11.8px;font-size:7.8px;color:#ffffff;font-weight:bold;letter-spacing:-0.426px;left:1066px;">VSTi</div>
<div class="t" style="top:88.10px;line-height:11.8px;font-size:7.8px;color:#ffffff;font-weight:bold;letter-spacing:-0.142px;left:1100.2px;">Media</div>
<div class="t" style="top:88.10px;line-height:11.8px;font-size:7.8px;color:#ffffff;font-weight:bold;letter-spacing:-0.933px;left:1141.2px;">CR</div>
<div class="t" style="top:88.10px;line-height:11.8px;font-size:7.8px;color:#ffffff;font-weight:bold;letter-spacing:-0.142px;left:1170.7px;">Meter</div>
<div style="left:1062px;top:106px;width:132.5px;height:14px;background:#585c60;border-radius:2.5px"></div>
<svg style="left:1066.5px;top:110px" width="6" height="6"><path d="M0.3 0.3 L5.3 3 L0.3 5.7Z" fill="#f4f4f4"/></svg>
<div class="t" style="top:107.45px;line-height:12.3px;font-size:8.3px;color:#f4f4f4;letter-spacing:-0.695px;left:1074.8px;">Channels</div>
<div style="left:1062px;top:127.7px;width:132.5px;height:14px;background:#585c60;border-radius:2.5px"></div>
<svg style="left:1066.5px;top:131.7px" width="6" height="6"><path d="M0.3 0.3 L5.3 3 L0.3 5.7Z" fill="#f4f4f4"/></svg>
<div class="t" style="top:129.15px;line-height:12.3px;font-size:8.3px;color:#f4f4f4;letter-spacing:-0.557px;left:1074.8px;">Downmix Presets</div>
<div style="left:1062px;top:149.3px;width:132.5px;height:14px;background:#585c60;border-radius:2.5px"></div>
<svg style="left:1066px;top:153.5px" width="6" height="6"><path d="M0.3 0.3 L5.7 0.3 L3 5.7Z" fill="#f4f4f4"/></svg>
<div class="t" style="top:150.75px;line-height:12.3px;font-size:8.3px;color:#f4f4f4;letter-spacing:-0.291px;left:1074.8px;">Monitors</div>
<div style="left:1063.8px;top:169.2px;width:23.4px;height:13px;background:linear-gradient(180deg,#70acee 0%,#4484d6 35%,#346ec0 70%,#2a5aa4 100%);border-radius:1.5px;border:1px solid #121a28"></div>
<div class="t" style="top:171.10px;line-height:10.2px;font-size:6.2px;color:#0c1c3c;font-weight:bold;left:1065.50px;width:20px;text-align:center;">A</div>
<div style="left:1089.6px;top:169.2px;width:104.2px;height:13px;background:linear-gradient(180deg,#70acee 0%,#4484d6 35%,#346ec0 70%,#2a5aa4 100%);border-radius:1.5px;border:1px solid #121a28"></div>
<div class="t" style="top:170.90px;line-height:11px;font-size:7px;color:#0c1c3c;font-weight:bold;letter-spacing:-0.327px;left:1101.64px;width:80px;text-align:center;">APS AEON</div>
<div style="left:1063.8px;top:186.5px;width:23.4px;height:13px;background:linear-gradient(180deg,#d6d8da 0%,#bcbec0 45%,#a2a4a6 100%);border-radius:1.5px;border:1px solid #1c1e20"></div>
<div class="t" style="top:188.50px;line-height:10.2px;font-size:6.2px;color:#2a2c2e;font-weight:bold;left:1065.50px;width:20px;text-align:center;">B</div>
<div style="left:1089.6px;top:186.5px;width:104.2px;height:13px;background:linear-gradient(180deg,#d6d8da 0%,#bcbec0 45%,#a2a4a6 100%);border-radius:1.5px;border:1px solid #1c1e20"></div>
<div class="t" style="top:188.40px;line-height:11px;font-size:7px;color:#1a1c1e;font-weight:bold;letter-spacing:-0.245px;left:1101.48px;width:80px;text-align:center;">Yamaha</div>
<div style="left:1063.5px;top:205px;width:131px;height:14.5px;background:#1b1e21;border-radius:2px;border:1px solid #2e3236"></div>
<div style="left:1065px;top:206.5px;width:87.5px;height:11.5px;background:#2cb8f4;"></div>
<div style="left:1073.5px;top:206.5px;width:0.7px;height:11.5px;background:#2196cc;"></div>
<div style="left:1086.3px;top:206.5px;width:0.7px;height:11.5px;background:#2196cc;"></div>
<div style="left:1104.5px;top:206.5px;width:0.7px;height:11.5px;background:#2196cc;"></div>
<div style="left:1119.5px;top:206.5px;width:0.7px;height:11.5px;background:#2196cc;"></div>
<div style="left:1135px;top:206.5px;width:0.7px;height:11.5px;background:#2196cc;"></div>
<div style="left:1152.5px;top:206.5px;width:13.5px;height:11.5px;background:#f0f01e;"></div>
<div class="t" style="top:207.75px;line-height:8.5px;font-size:4.5px;color:#3e4246;left:1168.5px;">6</div>
<div class="t" style="top:207.75px;line-height:8.5px;font-size:4.5px;color:#3e4246;left:1184px;">0</div>
<div style="left:1062.5px;top:421.5px;width:132px;height:14.3px;background:#585c60;border-radius:2.5px"></div>
<div style="left:1064.8px;top:423.4px;width:14px;height:9.6px;background:linear-gradient(180deg,#3470bc,#244f94);border-radius:1.5px;border:1px solid #0c1c34"></div>
<svg style="left:1068.3px;top:424.8px" width="7" height="7" viewBox="0 0 7 7"><path d="M2 1.6 A2.6 2.6 0 1 0 5 1.6" fill="none" stroke="#0c1c3c" stroke-width="0.9"/><path d="M3.5 0.4 V3.3" stroke="#0c1c3c" stroke-width="0.9"/></svg>
<div class="t" style="top:423.20px;line-height:11.6px;font-size:7.6px;color:#f4f4f4;letter-spacing:-0.167px;left:1082.5px;">Main</div>
<div class="t" style="top:423.20px;line-height:11.6px;font-size:7.6px;color:#f4f4f4;letter-spacing:0.077px;right:7.22px;text-align:right;">stereo-&gt;mono</div>
<div style="left:1063.2px;top:443.6px;width:127.8px;height:15.6px;background:linear-gradient(180deg,#eaa660 0%,#d2863a 25%,#b66e26 75%,#a05c1c 100%);border-radius:2px;border:1px solid #5a3410"></div>
<div class="t" style="top:447.00px;line-height:10.8px;font-size:6.8px;color:#1a0e02;font-weight:bold;left:1107.30px;width:40px;text-align:center;">Mix</div>
<div style="left:1065.3999999999999px;top:465.6px;width:16.4px;height:16.4px;background:#15171a;border-radius:50%;border:0.8px solid #3a3e42"></div>
<div style="left:1067.3999999999999px;top:467.6px;width:12.4px;height:12.4px;background:radial-gradient(circle at 50% 35%,#cfd1d3 0%,#b0b2b4 55%,#8e9092 100%);border-radius:50%"></div>
<div style="left:1065.5px;top:486.40000000000003px;width:16.4px;height:16.4px;background:#15171a;border-radius:50%;border:0.8px solid #3a3e42"></div>
<div style="left:1067.5px;top:488.40000000000003px;width:12.4px;height:12.4px;background:radial-gradient(circle at 50% 35%,#cfd1d3 0%,#b0b2b4 55%,#8e9092 100%);border-radius:50%"></div>
<div style="left:1065.3999999999999px;top:507.59999999999997px;width:16.4px;height:16.4px;background:#15171a;border-radius:50%;border:0.8px solid #3a3e42"></div>
<div style="left:1067.3999999999999px;top:509.59999999999997px;width:12.4px;height:12.4px;background:radial-gradient(circle at 50% 35%,#cfd1d3 0%,#b0b2b4 55%,#8e9092 100%);border-radius:50%"></div>
<div class="t" style="top:469.50px;line-height:9px;font-size:5px;color:#101214;font-weight:bold;left:1066.60px;width:14px;text-align:center;">Dim</div>
<svg style="left:1070.2px;top:491.6px" width="8" height="6"><path d="M0.5 0.3 L4.5 3 L0.5 5.7Z" fill="#101214"/><path d="M5 3 H6 M6.8 3 H7.8" stroke="#101214" stroke-width="0.9"/></svg>
<svg style="left:1069.8px;top:511.8px" width="8" height="8"><path d="M1.4 7.5 L3.2 1.2 H4.6 L5.4 7.5 Z" fill="#101214"/><path d="M3.8 5 L6.6 1.6" stroke="#101214" stroke-width="0.8"/><path d="M5.9 1 h1.6 M6.7 0.2 v1.6" stroke="#101214" stroke-width="0.55"/></svg>
<svg style="left:1101.1px;top:468.2px" width="54" height="54" viewBox="-27 -27 54 54"><path d="M0 -22.3 V-26" stroke="#55595d" stroke-width="0.9" transform="rotate(-120)"/><path d="M0 -22.3 V-26" stroke="#55595d" stroke-width="0.9" transform="rotate(-96)"/><path d="M0 -22.3 V-26" stroke="#55595d" stroke-width="0.9" transform="rotate(-72)"/><path d="M0 -22.3 V-26" stroke="#55595d" stroke-width="0.9" transform="rotate(-48)"/><path d="M0 -22.3 V-26" stroke="#55595d" stroke-width="0.9" transform="rotate(-24)"/><path d="M0 -22.3 V-26" stroke="#55595d" stroke-width="0.9" transform="rotate(0)"/><path d="M0 -22.3 V-26" stroke="#55595d" stroke-width="0.9" transform="rotate(24)"/><path d="M0 -22.3 V-26" stroke="#55595d" stroke-width="0.9" transform="rotate(48)"/><path d="M0 -22.3 V-26" stroke="#55595d" stroke-width="0.9" transform="rotate(72)"/><path d="M0 -22.3 V-26" stroke="#55595d" stroke-width="0.9" transform="rotate(96)"/><path d="M0 -22.3 V-26" stroke="#55595d" stroke-width="0.9" transform="rotate(120)"/><defs><radialGradient id="kg" cx="42%" cy="35%" r="75%"><stop offset="0" stop-color="#d8504e"/><stop offset="0.6" stop-color="#b42c30"/><stop offset="1" stop-color="#7e1c20"/></radialGradient><linearGradient id="kr" x1="0" y1="0" x2="0.6" y2="1"><stop offset="0" stop-color="#d4d6d8"/><stop offset="1" stop-color="#7e8082"/></linearGradient></defs><circle r="21.2" fill="#14161a"/><circle r="17.8" fill="none" stroke="url(#kr)" stroke-width="2.2" stroke-dasharray="4 0.4"/><circle r="16.7" fill="#1e2024"/><circle r="14.9" fill="url(#kg)"/><path d="M9.4 -1.9 L13.3 -3.4" stroke="#ffd8d8" stroke-width="1.6" stroke-linecap="round"/><text x="0.3" y="3.6" font-family="Liberation Sans, sans-serif" font-size="7.4" font-weight="bold" fill="#f4c8c8" text-anchor="middle">0.00</text></svg>
<div style="left:1169.7px;top:465.3px;width:21.6px;height:59.8px;background:#15181a;border-radius:2px;border:1px solid #3a3e42"></div>
<div style="left:1171px;top:478.7px;width:19px;height:6.5px;background:#f0f01e;"></div>
<div style="left:1171px;top:485.2px;width:19px;height:38px;background:#2cb8f4;"></div>
<div style="left:1171px;top:497.5px;width:19px;height:0.7px;background:#2aa6e0;"></div>
<div style="left:1171px;top:511.5px;width:19px;height:0.7px;background:#2aa6e0;"></div>
<div class="t" style="top:465.50px;line-height:9px;font-size:5px;color:#a8a888;font-weight:bold;left:1176.50px;width:8px;text-align:center;">0</div>
<div style="left:1172.5px;top:470.6px;width:4px;height:0.7px;background:#6a6a3a;"></div>
<div style="left:1184.5px;top:470.6px;width:4px;height:0.7px;background:#6a6a3a;"></div>
<div style="left:1063.5px;top:529px;width:29.5px;height:15.7px;background:linear-gradient(180deg,#70acee 0%,#4484d6 35%,#346ec0 70%,#2a5aa4 100%);border-radius:1.5px;border:1px solid #121a28"></div>
<div class="t" style="top:532.10px;line-height:10.2px;font-size:6.2px;color:#0c1c3c;font-weight:bold;left:1068.20px;width:20px;text-align:center;">A</div>
<div style="left:1096px;top:529px;width:30px;height:15.7px;background:linear-gradient(180deg,#d6d8da 0%,#bcbec0 45%,#a2a4a6 100%);border-radius:1.5px;border:1px solid #1c1e20"></div>
<div class="t" style="top:532.10px;line-height:10.2px;font-size:6.2px;color:#2a2c2e;font-weight:bold;left:1101.00px;width:20px;text-align:center;">B</div>
<div style="left:1129.5px;top:529px;width:40.5px;height:15.7px;background:linear-gradient(180deg,#d6d8da 0%,#bcbec0 45%,#a2a4a6 100%);border-radius:1.5px;border:1px solid #1c1e20"></div>
<div class="t" style="top:531.70px;line-height:11px;font-size:7px;color:#1a1c1e;font-weight:bold;left:1131.70px;width:36px;text-align:center;">Mono</div>
<div style="left:1173px;top:529px;width:19.5px;height:15.7px;background:linear-gradient(180deg,#d6d8da 0%,#bcbec0 45%,#a2a4a6 100%);border-radius:1.5px;border:1px solid #1c1e20"></div>
<div class="t" style="top:531.70px;line-height:11px;font-size:7px;color:#1a1c1e;font-weight:bold;left:1174.70px;width:16px;text-align:center;">2</div>
<div style="left:1056.5px;top:555px;width:44px;height:14px;background:#24282c;border:1px solid #4a4f54;border-top:none;border-radius:0 0 4px 4px"></div>
<div style="left:1057.5px;top:553px;width:42px;height:4px;background:#24282c;"></div>
<div class="t" style="top:557.90px;line-height:11.8px;font-size:7.8px;color:#ffffff;font-weight:bold;left:1058.00px;width:40px;text-align:center;">Main</div>
<div class="t" style="top:557.90px;line-height:11.8px;font-size:7.8px;color:#ffffff;font-weight:bold;left:1104.00px;width:40px;text-align:center;">Inserts</div>
<div style="left:2px;top:571.5px;width:1197px;height:23.7px;background:#24282c;"></div>
<div style="left:5px;top:576.3px;width:15.5px;height:15px;background:#3c4144;border-radius:2px"></div>
<svg style="left:7.5px;top:578.7px" width="10" height="10" viewBox="0 0 10 10"><path d="M8.6 3 A4.1 4.1 0 1 0 9.1 5.6" fill="none" stroke="#f0f0f0" stroke-width="1.2"/><path d="M7.2 3.6 L9.9 1.4 L9.9 4.4Z" fill="#f0f0f0"/><circle cx="5" cy="5" r="2.2" fill="none" stroke="#f0f0f0" stroke-width="0.9"/><path d="M5 3.8 V5.1 H6" stroke="#f0f0f0" stroke-width="0.7" fill="none"/></svg>
<div style="left:23.4px;top:576.3px;width:27.5px;height:15px;background:#191c1f;border-radius:2px;border:1px solid #34383c"></div>
<svg style="left:40.4px;top:580.7px" width="6" height="6"><path d="M0.4 0.7 L5.6 0.7 L3 5.2 Z" fill="#f0f0f0"/></svg>
<div style="left:52.3px;top:580px;width:1.4px;height:1.4px;background:#b4b6b8;"></div>
<div style="left:52.3px;top:583.2px;width:1.4px;height:1.4px;background:#b4b6b8;"></div>
<div style="left:52.3px;top:586.4px;width:1.4px;height:1.4px;background:#b4b6b8;"></div>
<div style="left:58px;top:576.3px;width:27.5px;height:15px;background:#191c1f;border-radius:2px;border:1px solid #34383c"></div>
<svg style="left:75px;top:580.7px" width="6" height="6"><path d="M0.4 0.7 L5.6 0.7 L3 5.2 Z" fill="#f0f0f0"/></svg>
<div style="left:86.9px;top:580px;width:1.4px;height:1.4px;background:#b4b6b8;"></div>
<div style="left:86.9px;top:583.2px;width:1.4px;height:1.4px;background:#b4b6b8;"></div>
<div style="left:86.9px;top:586.4px;width:1.4px;height:1.4px;background:#b4b6b8;"></div>
<div style="left:92.4px;top:576.3px;width:27.5px;height:15px;background:#191c1f;border-radius:2px;border:1px solid #34383c"></div>
<svg style="left:109.4px;top:580.7px" width="6" height="6"><path d="M0.4 0.7 L5.6 0.7 L3 5.2 Z" fill="#f0f0f0"/></svg>
<div style="left:121.30000000000001px;top:580px;width:1.4px;height:1.4px;background:#b4b6b8;"></div>
<div style="left:121.30000000000001px;top:583.2px;width:1.4px;height:1.4px;background:#b4b6b8;"></div>
<div style="left:121.30000000000001px;top:586.4px;width:1.4px;height:1.4px;background:#b4b6b8;"></div>
<div style="left:28.3px;top:580.4px;width:6.6px;height:6.6px;background:#f0f0f0;border-radius:50%"></div>
<svg style="left:61px;top:579px" width="12" height="10" viewBox="0 0 12 10"><path d="M0 5 H12" stroke="#f0f0f0" stroke-width="1"/><path d="M6 0.2 L7 5 L6 9.8 L5 5Z M3.6 2 L4.3 5 L3.6 8 L2.9 5Z M8.4 2 L9.1 5 L8.4 8 L7.7 5Z M1.7 3.5 L2.1 5 L1.7 6.5 L1.3 5Z M10.3 3.5 L10.7 5 L10.3 6.5 L9.9 5Z" fill="#f0f0f0"/></svg>
<svg style="left:95.5px;top:579.2px" width="10" height="10" viewBox="0 0 10 10"><circle cx="5" cy="5" r="4.6" fill="#f0f0f0"/><path d="M2 4.2 Q5 1.6 8 4.2" stroke="#3a3e42" stroke-width="0.9" fill="none"/></svg>
<div style="left:127px;top:576.3px;width:23px;height:15px;background:#3c4144;border-radius:2px"></div>
<div class="t" style="top:577.80px;line-height:12.4px;font-size:8.4px;color:#f0f0f0;left:128.70px;width:20px;text-align:center;">AQ</div>
<div style="left:327px;top:576.3px;width:93px;height:15px;background:#191c1f;border-radius:2px"></div>
<div style="left:327px;top:576.3px;width:15px;height:15px;background:#3c4144;border-radius:2px 0 0 2px"></div>
<svg style="left:332px;top:580.5px" width="6" height="6"><path d="M0 0 H6 L0 6Z" fill="#f0f0f0"/></svg>
<div class="t" style="top:577.60px;line-height:12.8px;font-size:8.8px;color:#e8e8e8;letter-spacing:0.465px;right:781.84px;text-align:right;word-spacing:1.8px;">13. 2. 1.118</div>
<div style="left:427px;top:576.3px;width:93px;height:15px;background:#191c1f;border-radius:2px"></div>
<div style="left:427px;top:576.3px;width:15px;height:15px;background:#3c4144;border-radius:2px 0 0 2px"></div>
<svg style="left:432px;top:580.5px" width="6" height="6"><path d="M0 0 H6 V6Z" fill="#f0f0f0"/></svg>
<div class="t" style="top:577.60px;line-height:12.8px;font-size:8.8px;color:#e8e8e8;letter-spacing:0.415px;right:681.89px;text-align:right;word-spacing:1.8px;">25. 4. 3. 35</div>
<div style="left:524px;top:576.3px;width:46.5px;height:15px;background:#3c4144;border-radius:2px"></div>
<svg style="left:528.5px;top:579.3px" width="7" height="9"><rect x="0.3" y="3.8" width="6.4" height="4.8" fill="#f0f0f0"/><path d="M1.6 3.8 V2.4 Q1.6 0.7 3.5 0.7 Q5.4 0.7 5.4 2.4 V3.8" fill="none" stroke="#f0f0f0" stroke-width="1.1"/></svg>
<svg style="left:543.5px;top:579.5px" width="8" height="9"><path d="M0.5 0.5 H7.5 L4 4.5Z" fill="#f0f0f0"/><path d="M4 4 V7 M1.5 8 H6.5" stroke="#f0f0f0" stroke-width="1.1"/></svg>
<svg style="left:559px;top:579.5px" width="8" height="9"><path d="M0.5 8.5 H7.5 L4 4.5Z" fill="#f0f0f0"/><path d="M4 5 V1.5" stroke="#f0f0f0" stroke-width="1.1"/><circle cx="4" cy="1.6" r="1.2" fill="#f0f0f0"/></svg>
<div style="left:572.5px;top:580px;width:1.4px;height:1.4px;background:#b4b6b8;"></div>
<div style="left:572.5px;top:583.2px;width:1.4px;height:1.4px;background:#b4b6b8;"></div>
<div style="left:572.5px;top:586.4px;width:1.4px;height:1.4px;background:#b4b6b8;"></div>
<div style="left:577.6px;top:573.7px;width:125.8px;height:20.2px;background:#7c7e80;border-radius:3px;border:1px solid #b8babc"></div>
<div style="left:578.6px;top:574.7px;width:31.4px;height:18.2px;background:#8a7ae8;border-radius:2px 0 0 2px"></div>
<div style="left:610px;top:574.7px;width:30.5px;height:18.2px;background:#7a7c7e;"></div>
<div style="left:640.5px;top:574.7px;width:31.5px;height:18.2px;background:#3cd246;"></div>
<div style="left:672px;top:574.7px;width:30.4px;height:18.2px;background:#7c7e80;border-radius:0 2px 2px 0"></div>
<svg style="left:588px;top:578.7px" width="12" height="10" viewBox="0 0 12 10"><path d="M3.2 8.5 H8 Q10.8 8.5 10.8 5.8 Q10.8 3 7.8 3 Q5.5 3 3.4 7.2" fill="none" stroke="#20124a" stroke-width="1.2"/><path d="M0.8 6.2 L3.6 9 L4.6 5.6Z" fill="#20124a"/></svg>
<svg style="left:621px;top:579.7px" width="8" height="8"><rect x="0.8" y="0.8" width="6.4" height="6.4" fill="none" stroke="#f4f4f4" stroke-width="1.5"/></svg>
<svg style="left:652.5px;top:579px" width="9" height="10"><path d="M1 0.9 L8 5 L1 9.1Z" fill="none" stroke="#0a2a0c" stroke-width="1.3" stroke-linejoin="round"/></svg>
<svg style="left:683px;top:579.5px" width="9" height="9"><circle cx="4.5" cy="4.5" r="3.3" fill="none" stroke="#f4f4f4" stroke-width="1.6"/></svg>
<div style="left:705.8px;top:580px;width:1.4px;height:1.4px;background:#b4b6b8;"></div>
<div style="left:705.8px;top:583.2px;width:1.4px;height:1.4px;background:#b4b6b8;"></div>
<div style="left:705.8px;top:586.4px;width:1.4px;height:1.4px;background:#b4b6b8;"></div>
<div style="left:710px;top:576.3px;width:24px;height:15px;background:#3c4144;border-radius:2px"></div>
<svg style="left:718px;top:579.2px" width="9" height="9" viewBox="0 0 9 9"><circle cx="4.5" cy="4.5" r="4" fill="#6e7276"/><circle cx="2.6" cy="4.5" r="3.4" fill="#3c4144"/></svg>
<div style="left:737px;top:576.3px;width:93px;height:15px;background:#191c1f;border-radius:2px;border:1px solid #34383c"></div>
<div style="left:752px;top:576.8px;width:0.8px;height:14px;background:#34383c;"></div>
<svg style="left:741.5px;top:579.2px" width="7" height="9"><path d="M5 0.5 V6.5" stroke="#f0f0f0" stroke-width="1.1"/><ellipse cx="3.2" cy="6.9" rx="2.3" ry="1.6" fill="#f0f0f0"/></svg>
<div class="t" style="top:577.60px;line-height:12.8px;font-size:8.8px;color:#e8e8e8;letter-spacing:0.465px;right:371.84px;text-align:right;word-spacing:1.8px;">24. 3. 4. 22</div>
<div style="left:832.5px;top:580px;width:1.4px;height:1.4px;background:#b4b6b8;"></div>
<div style="left:832.5px;top:583.2px;width:1.4px;height:1.4px;background:#b4b6b8;"></div>
<div style="left:832.5px;top:586.4px;width:1.4px;height:1.4px;background:#b4b6b8;"></div>
<div style="left:838px;top:576.3px;width:15px;height:15px;background:#f0f0f0;border-radius:2px 0 0 2px"></div>
<svg style="left:841px;top:579px" width="9" height="10" viewBox="0 0 9 10"><path d="M2.8 1 V7 M6.6 3 V9 M2.8 1 L6.6 3" stroke="#1a1a1a" stroke-width="1" fill="none"/><ellipse cx="1.9" cy="7.3" rx="1.5" ry="1.1" fill="#1a1a1a"/><path d="M0.5 3.5 L8.5 6.5" stroke="#1a1a1a" stroke-width="0.8"/></svg>
<div style="left:853px;top:576.3px;width:51px;height:15px;background:#191c1f;"></div>
<div class="t" style="top:578.10px;line-height:11.8px;font-size:7.8px;color:#e8e8e8;letter-spacing:0.016px;right:309.68px;text-align:right;">120.000</div>
<svg style="left:894.5px;top:579px" width="5" height="10"><path d="M0 3.8 L2.5 0.6 L5 3.8Z M0 6.2 L2.5 9.4 L5 6.2Z" fill="#f0f0f0"/></svg>
<div style="left:904px;top:576.3px;width:24.5px;height:15px;background:#3c4144;border-radius:0 2px 2px 0"></div>
<div class="t" style="top:578.20px;line-height:11.6px;font-size:7.6px;color:#f0f0f0;letter-spacing:-0.083px;left:910.7px;">Tap</div>
<div style="left:931px;top:580px;width:1.4px;height:1.4px;background:#b4b6b8;"></div>
<div style="left:931px;top:583.2px;width:1.4px;height:1.4px;background:#b4b6b8;"></div>
<div style="left:931px;top:586.4px;width:1.4px;height:1.4px;background:#b4b6b8;"></div>
<div style="left:1104.5px;top:576.3px;width:30px;height:15px;background:#3c4144;border-radius:2px"></div>
<svg style="left:1108.5px;top:579.3px" width="8" height="9"><path d="M1 8.3 L3 1.5 H4.6 L6.4 8.3 Z" fill="#f0f0f0"/><path d="M3.7 5.6 L7 1.8" stroke="#f0f0f0" stroke-width="0.9"/><path d="M6 1 h1.8 M6.9 0.1 v1.8" stroke="#f0f0f0" stroke-width="0.7"/></svg>
<svg style="left:1122px;top:579.5px" width="9" height="9" viewBox="0 0 9 10"><path d="M0.6 8 L8.4 2.4 M7.8 7 A3.7 3.7 0 1 1 8.2 4.3" fill="none" stroke="#f0f0f0" stroke-width="1.4"/></svg>
<div style="left:1136.5px;top:580px;width:1.4px;height:1.4px;background:#b4b6b8;"></div>
<div style="left:1136.5px;top:583.2px;width:1.4px;height:1.4px;background:#b4b6b8;"></div>
<div style="left:1136.5px;top:586.4px;width:1.4px;height:1.4px;background:#b4b6b8;"></div>
<div style="left:1141px;top:576.3px;width:54.5px;height:15px;background:#191c1f;border-radius:2px;border:1px solid #34383c"></div>
<div style="left:1157px;top:576.8px;width:0.8px;height:14px;background:#34383c;"></div>
<div style="left:1179px;top:579px;width:3.8px;height:10.5px;background:#2cb8f4;"></div>
<div style="left:1183.8px;top:579px;width:3.8px;height:10.5px;background:#2cb8f4;"></div>
<div style="left:1179px;top:579px;width:3.8px;height:3px;background:linear-gradient(180deg,#a8e060,#2cb8f4);"></div>
<div style="left:1183.8px;top:579px;width:3.8px;height:3px;background:linear-gradient(180deg,#a8e060,#2cb8f4);"></div>
<div style="left:694.3px;top:323.8px;width:259.2px;height:94.8px;background:#0b0c0d;border-radius:1px"></div>
<div style="left:697.5px;top:326px;width:80px;height:14px;background:#292d31;border-radius:3.5px 3.5px 0 0;border:1px solid #4a4e52;border-bottom:none"></div>
<div class="t" style="top:327.60px;line-height:11.2px;font-size:7.2px;color:#ffffff;font-weight:bold;letter-spacing:-0.195px;left:704.8px;">Audio Performance</div>
<div style="left:780px;top:328.7px;width:152px;height:0.9px;background:#3a3e42;"></div>
<div style="left:780px;top:330.6px;width:152px;height:0.9px;background:#2a2d31;"></div>
<div class="t" style="top:325.60px;line-height:11.2px;font-size:7.2px;color:#ffffff;font-weight:bold;left:940.60px;width:10px;text-align:center;">X</div>
<div style="left:697.5px;top:339px;width:254px;height:77.5px;background:#292d31;border-radius:0 3.5px 3.5px 3.5px;border:1px solid #4a4e52"></div>
<div style="left:698.5px;top:338.5px;width:78px;height:2px;background:#292d31;"></div>
<div class="t" style="top:344.70px;line-height:10.4px;font-size:6.4px;color:#e4e4e4;letter-spacing:-0.198px;left:704.8px;">Real Time</div>
<div style="left:748.5px;top:343.8px;width:172px;height:11.6px;background:#303438;border-radius:2px;border:1px solid #43474b"></div>
<div style="left:792.5px;top:344.8px;width:0.8px;height:9.6px;background:#3e4246;"></div>
<div style="left:834.5px;top:344.8px;width:0.8px;height:9.6px;background:#3e4246;"></div>
<div style="left:876.5px;top:344.8px;width:0.8px;height:9.6px;background:#3e4246;"></div>
<div style="left:750.3px;top:345.70000000000005px;width:6.7px;height:7.8px;background:#d2d6da;border-radius:1px"></div>
<div class="t" style="top:359.80px;line-height:10.4px;font-size:6.4px;color:#e4e4e4;letter-spacing:-0.187px;left:704.8px;">ASIO-Guard</div>
<div style="left:748.5px;top:358.9px;width:172px;height:11.6px;background:#303438;border-radius:2px;border:1px solid #43474b"></div>
<div style="left:792.5px;top:359.9px;width:0.8px;height:9.6px;background:#3e4246;"></div>
<div style="left:834.5px;top:359.9px;width:0.8px;height:9.6px;background:#3e4246;"></div>
<div style="left:876.5px;top:359.9px;width:0.8px;height:9.6px;background:#3e4246;"></div>
<div style="left:750.3px;top:360.8px;width:168.3px;height:7.8px;background:#d2d6da;border-radius:1px"></div>
<div style="left:792.5px;top:360.8px;width:0.8px;height:7.8px;background:#e8eaec;"></div>
<div style="left:834.5px;top:360.8px;width:0.8px;height:7.8px;background:#e8eaec;"></div>
<div style="left:876.5px;top:360.8px;width:0.8px;height:7.8px;background:#e8eaec;"></div>
<div class="t" style="top:375.10px;line-height:10.4px;font-size:6.4px;color:#e4e4e4;letter-spacing:-0.395px;left:704.8px;">Peak</div>
<div style="left:748.5px;top:374.2px;width:172px;height:11.6px;background:#303438;border-radius:2px;border:1px solid #43474b"></div>
<div style="left:792.5px;top:375.2px;width:0.8px;height:9.6px;background:#3e4246;"></div>
<div style="left:834.5px;top:375.2px;width:0.8px;height:9.6px;background:#3e4246;"></div>
<div style="left:876.5px;top:375.2px;width:0.8px;height:9.6px;background:#3e4246;"></div>
<div style="left:750.3px;top:376.1px;width:28px;height:7.8px;background:#d2d6da;border-radius:1px"></div>
<div class="t" style="top:399.50px;line-height:10.4px;font-size:6.4px;color:#e4e4e4;letter-spacing:-0.289px;left:704.8px;">Disk Cache</div>
<div style="left:748.5px;top:398.59999999999997px;width:172px;height:11.6px;background:#303438;border-radius:2px;border:1px solid #43474b"></div>
<div style="left:792.5px;top:399.59999999999997px;width:0.8px;height:9.6px;background:#3e4246;"></div>
<div style="left:834.5px;top:399.59999999999997px;width:0.8px;height:9.6px;background:#3e4246;"></div>
<div style="left:876.5px;top:399.59999999999997px;width:0.8px;height:9.6px;background:#3e4246;"></div>
<div style="left:750.5px;top:400.8px;width:0.9px;height:7.4px;background:#d2d6da;"></div>
<div style="left:927px;top:343.8px;width:19.5px;height:42px;background:#303438;border-radius:2px;border:1px solid #43474b"></div>
<div style="left:927px;top:398.7px;width:19.5px;height:11.6px;background:#303438;border-radius:2px;border:1px solid #43474b"></div>
</body></html>
